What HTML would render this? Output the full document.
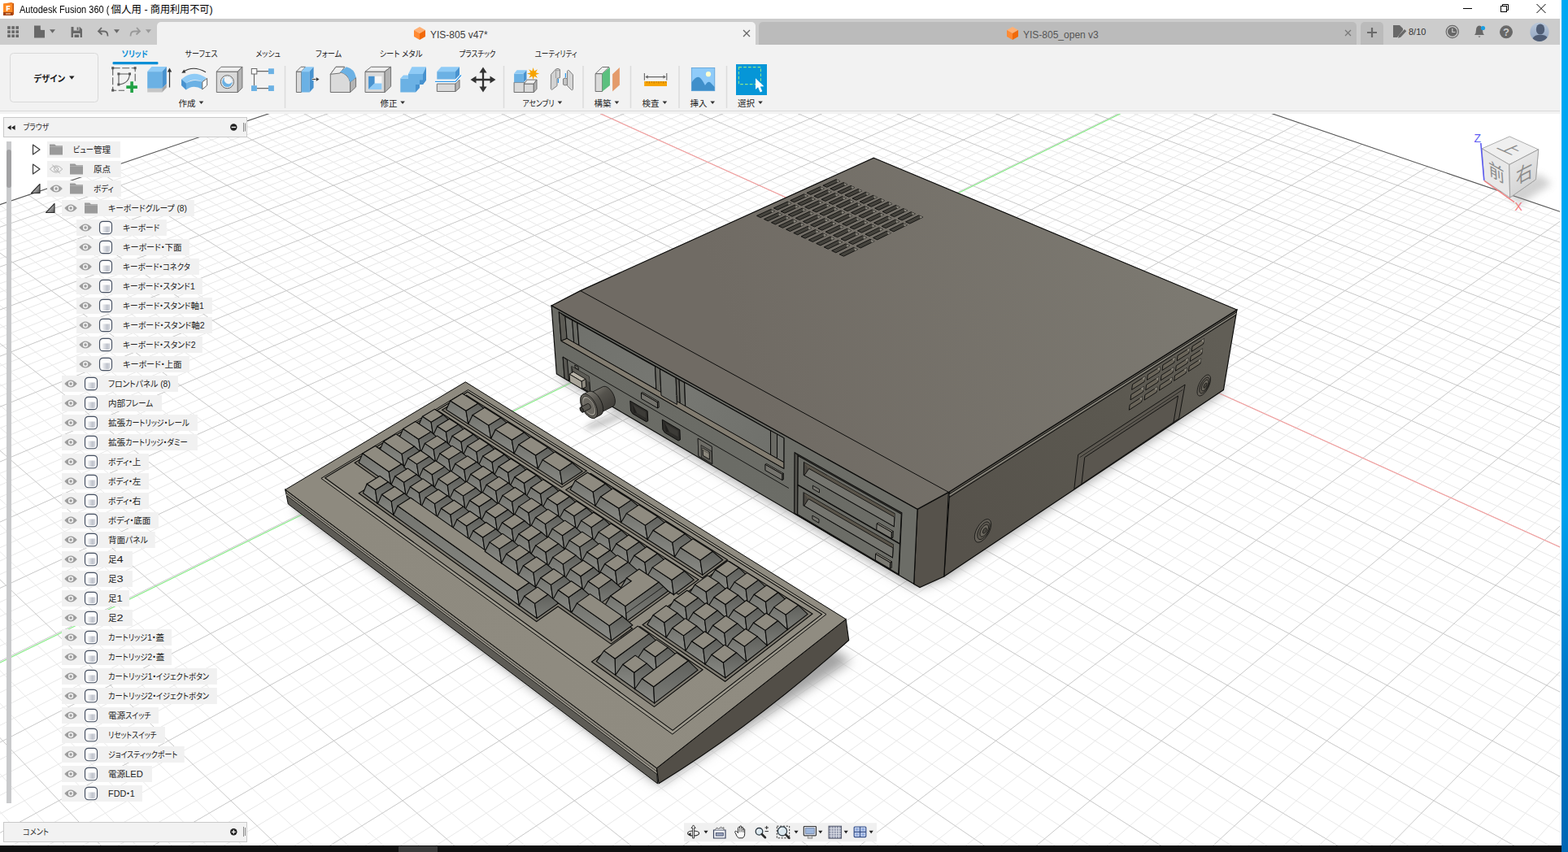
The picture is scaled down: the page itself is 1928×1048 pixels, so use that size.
<!DOCTYPE html>
<html><head><meta charset="utf-8"><title>Autodesk Fusion 360</title>
<style>html,body{margin:0;padding:0}body{width:1928px;height:1048px;overflow:hidden;position:relative;background:#fff;font-family:"Liberation Sans","Noto Sans CJK JP",sans-serif}.a{position:absolute}svg{position:absolute;left:0;top:0}svg text{font-feature-settings:"palt"}</style></head><body>
<div class="a" style="left:0px;top:0px;width:1920px;height:23px;background:#fff;"></div><div class="a" style="left:0px;top:23px;width:1918px;height:32px;background:#cccccc;"></div><div class="a" style="left:0px;top:55px;width:1918px;height:85px;background:#f2f2f2;"></div><div class="a" style="left:0px;top:136px;width:1918px;height:1.2px;background:#dadada;"></div><div class="a" style="left:193px;top:27px;width:736px;height:28px;background:#f2f2f2;border-radius:5px 5px 0 0"></div><div class="a" style="left:933px;top:27px;width:735px;height:28px;background:#bbbbbb;border-radius:5px 5px 0 0"></div><div class="a" style="left:1673px;top:27px;width:28px;height:28px;background:#bbbbbb;border-radius:5px 5px 0 0"></div>
<svg width="1928" height="1048" viewBox="0 0 1928 1048">
<defs><linearGradient id="av" x1="0" y1="0" x2="0" y2="1"><stop offset="0" stop-color="#b9c7d9"/><stop offset="1" stop-color="#8fa4c0"/></linearGradient><clipPath id="avc"><circle cx="1893" cy="39.3" r="11.6"/></clipPath><clipPath id="cv"><rect x="0" y="140" width="1918" height="900"/></clipPath><linearGradient id="gTop" gradientUnits="userSpaceOnUse" x1="930" y1="500" x2="1450" y2="325"><stop offset="0" stop-color="#706b64"/><stop offset="1" stop-color="#7c7971"/></linearGradient><linearGradient id="gFront" gradientUnits="userSpaceOnUse" x1="690" y1="420" x2="1120" y2="660"><stop offset="0" stop-color="#6a6b65"/><stop offset="1" stop-color="#6c6d67"/></linearGradient><linearGradient id="gCover" gradientUnits="userSpaceOnUse" x1="700" y1="400" x2="960" y2="560"><stop offset="0" stop-color="#70716c"/><stop offset="0.5" stop-color="#777873"/><stop offset="1" stop-color="#6f706b"/></linearGradient><linearGradient id="gSide" gradientUnits="userSpaceOnUse" x1="1170" y1="660" x2="1510" y2="430"><stop offset="0" stop-color="#56524b"/><stop offset="0.6" stop-color="#5b5850"/><stop offset="1" stop-color="#615e56"/></linearGradient><filter id="blur12" x="-20%" y="-20%" width="140%" height="140%"><feGaussianBlur stdDeviation="7"/></filter><filter id="blur4" x="-20%" y="-20%" width="140%" height="140%"><feGaussianBlur stdDeviation="3.5"/></filter><linearGradient id="gKnob" gradientUnits="userSpaceOnUse" x1="722" y1="478" x2="748" y2="508"><stop offset="0" stop-color="#8a877f"/><stop offset="0.45" stop-color="#55534d"/><stop offset="1" stop-color="#3d3b37"/></linearGradient><linearGradient id="gFdd" gradientUnits="userSpaceOnUse" x1="985" y1="570" x2="1100" y2="690"><stop offset="0" stop-color="#696a64"/><stop offset="1" stop-color="#6d6e68"/></linearGradient><linearGradient id="gPlate" gradientUnits="userSpaceOnUse" x1="420" y1="640" x2="1000" y2="760"><stop offset="0" stop-color="#8e8a7f"/><stop offset="1" stop-color="#908c81"/></linearGradient><linearGradient id="gKF" x1="0" y1="0" x2="0" y2="1"><stop offset="0" stop-color="#73746f"/><stop offset="1" stop-color="#8a8b86"/></linearGradient><linearGradient id="gKR" x1="0" y1="0" x2="0" y2="1"><stop offset="0" stop-color="#5f605c"/><stop offset="1" stop-color="#7b7c77"/></linearGradient><filter id="blur5" x="-50%" y="-50%" width="200%" height="200%"><feGaussianBlur stdDeviation="5"/></filter><linearGradient id="gVc" gradientUnits="userSpaceOnUse" x1="1860" y1="200" x2="1885" y2="240"><stop offset="0" stop-color="#e6e6e6"/><stop offset="1" stop-color="#cfcfcf"/></linearGradient></defs>
<g clip-path="url(#cv)"><rect x="0" y="140" width="1918" height="900" fill="#fff"/><path d="M949.5 -69.6 L-621.0 461.7M959.4 -66.2 L-614.3 470.0M969.4 -62.8 L-607.6 478.5M989.7 -55.9 L-593.9 495.6M999.9 -52.5 L-586.9 504.4M1010.2 -49.0 L-579.8 513.2M1020.5 -45.4 L-572.7 522.1M1041.5 -38.3 L-558.2 540.3M1052.1 -34.7 L-550.8 549.6M1062.8 -31.0 L-543.3 559.0M1073.5 -27.4 L-535.7 568.5M1095.3 -19.9 L-520.3 587.8M1106.3 -16.2 L-512.4 597.6M1117.4 -12.4 L-504.4 607.6M1128.6 -8.6 L-496.4 617.7M1151.2 -0.9 L-480.0 638.3M1162.7 3.0 L-471.6 648.7M1174.2 6.9 L-463.1 659.4M1185.8 10.9 L-454.5 670.1M1209.3 18.9 L-437.0 692.0M1221.2 22.9 L-428.1 703.2M1233.2 27.0 L-419.0 714.5M1245.3 31.1 L-409.9 726.0M1269.8 39.5 L-391.2 749.5M1282.2 43.7 L-381.6 761.4M1294.7 48.0 L-371.9 773.5M1307.2 52.2 L-362.1 785.8M1332.7 60.9 L-342.1 810.9M1345.6 65.3 L-331.9 823.7M1358.6 69.7 L-321.5 836.7M1371.7 74.2 L-311.0 849.9M1398.3 83.3 L-289.5 876.8M1411.8 87.8 L-278.5 890.6M1425.3 92.5 L-267.3 904.5M1439.0 97.1 L-256.0 918.7M1466.7 106.6 L-232.8 947.7M1480.7 111.3 L-221.0 962.5M1494.9 116.2 L-209.0 977.6M1509.2 121.0 L-196.8 992.8M1538.1 130.9 L-171.8 1024.1M1552.7 135.9 L-159.0 1040.1M1567.5 140.9 L-146.0 1056.4M1582.5 146.0 L-132.8 1072.9M1612.7 156.3 L-105.8 1106.8M1628.0 161.5 L-91.9 1124.2M1643.5 166.8 L-77.8 1141.8M1659.1 172.1 L-63.5 1159.7M1690.7 182.9 L-34.2 1196.5M1706.7 188.3 L-19.1 1215.4M1722.9 193.8 L-3.8 1234.6M1739.2 199.4 L11.8 1254.1M1772.4 210.7 L43.8 1294.2M1789.2 216.4 L60.3 1314.8M1806.1 222.2 L77.0 1335.7M1823.2 228.0 L94.1 1357.0M1858.0 239.8 L129.1 1400.9M1875.6 245.8 L147.1 1423.5M1893.4 251.9 L165.4 1446.4M1911.3 258.0 L184.1 1469.9M1947.8 270.4 L222.6 1518.1M1966.3 276.7 L242.4 1542.9M1985.0 283.1 L262.7 1568.2M2003.8 289.5 L283.3 1594.0M2042.1 302.6 L325.8 1647.2M2061.6 309.2 L347.7 1674.6M2081.2 315.9 L370.0 1702.7M2101.1 322.6 L392.9 1731.3M2141.4 336.4 L440.0 1790.3M2161.8 343.3 L464.4 1820.8M2182.5 350.4 L489.3 1852.0M2203.4 357.5 L514.7 1883.8M2245.9 372.0 L567.4 1949.7M2267.4 379.3 L594.6 1983.8M2289.2 386.7 L622.5 2018.7M2311.3 394.3 L651.0 2054.4M2356.1 409.5 L710.1 2128.5M2378.8 417.3 L740.7 2166.9M2401.9 425.1 L772.1 2206.2M2425.1 433.0 L804.3 2246.5M2472.5 449.2 L871.2 2330.2M2496.5 457.4 L906.0 2373.8M2520.9 465.7 L941.6 2418.4M949.5 -69.6 L2532.6 469.6M939.5 -66.2 L2525.9 478.1M929.5 -62.8 L2519.1 486.6M919.3 -59.4 L2512.2 495.2M898.8 -52.5 L2498.1 512.8M888.5 -49.0 L2491.0 521.7M878.0 -45.4 L2483.8 530.8M867.5 -41.9 L2476.5 539.9M846.2 -34.7 L2461.6 558.5M835.5 -31.0 L2454.0 568.0M824.6 -27.4 L2446.4 577.6M813.7 -23.7 L2438.6 587.4M791.6 -16.2 L2422.8 607.2M780.5 -12.4 L2414.7 617.2M769.2 -8.6 L2406.6 627.4M757.9 -4.8 L2398.3 637.8M734.9 3.0 L2381.5 658.9M723.3 6.9 L2372.9 669.6M711.6 10.9 L2364.2 680.5M699.8 14.9 L2355.4 691.5M675.9 22.9 L2337.4 714.0M663.9 27.0 L2328.3 725.5M651.7 31.1 L2319.0 737.1M639.4 35.3 L2309.6 748.9M614.6 43.7 L2290.4 773.0M602.0 48.0 L2280.6 785.3M589.3 52.2 L2270.6 797.7M576.6 56.6 L2260.5 810.3M550.7 65.3 L2240.0 836.1M537.6 69.7 L2229.4 849.3M524.4 74.2 L2218.8 862.6M511.1 78.7 L2207.9 876.2M484.1 87.8 L2185.8 903.9M470.4 92.5 L2174.5 918.1M456.7 97.1 L2163.0 932.4M442.8 101.8 L2151.4 947.0M414.6 111.3 L2127.5 976.9M400.4 116.2 L2115.3 992.2M386.0 121.0 L2103.0 1007.7M371.5 125.9 L2090.4 1023.4M342.1 135.9 L2064.6 1055.7M327.2 140.9 L2051.4 1072.2M312.2 146.0 L2038.0 1089.0M297.1 151.1 L2024.4 1106.0M266.3 161.5 L1996.5 1141.0M250.8 166.8 L1982.2 1158.9M235.1 172.1 L1967.6 1177.1M219.2 177.5 L1952.8 1195.7M187.1 188.3 L1922.5 1233.7M170.8 193.8 L1906.9 1253.2M154.3 199.4 L1891.0 1273.0M137.7 205.0 L1874.9 1293.3M104.1 216.4 L1841.7 1334.8M87.0 222.2 L1824.7 1356.1M69.8 228.0 L1807.4 1377.8M52.4 233.9 L1789.7 1399.9M17.1 245.8 L1753.4 1445.4M-0.9 251.9 L1734.7 1468.8M-18.9 258.0 L1715.7 1492.6M-37.2 264.2 L1696.2 1517.0M-74.3 276.7 L1656.3 1567.0M-93.1 283.1 L1635.7 1592.8M-112.1 289.5 L1614.7 1619.1M-131.3 296.0 L1593.2 1646.0M-170.2 309.2 L1549.0 1701.4M-190.0 315.9 L1526.2 1730.0M-210.0 322.6 L1502.8 1759.1M-230.2 329.5 L1479.0 1789.0M-271.2 343.3 L1429.8 1850.6M-292.0 350.4 L1404.4 1882.4M-313.0 357.5 L1378.4 1914.9M-334.3 364.7 L1351.9 1948.2M-377.5 379.3 L1296.8 2017.1M-399.5 386.7 L1268.3 2052.8M-421.6 394.3 L1239.1 2089.4M-444.1 401.8 L1209.3 2126.8M-489.7 417.3 L1147.3 2204.4M-512.9 425.1 L1115.1 2244.7M-536.3 433.0 L1082.2 2286.0M-560.0 441.1 L1048.3 2328.3M-608.2 457.4 L978.0 2416.4" stroke="#e8e8e8" stroke-width="1" fill="none"/><path d="M979.5 -59.4 L-600.7 487.0M1031.0 -41.9 L-565.5 531.2M1084.4 -23.7 L-528.0 578.1M1139.9 -4.8 L-488.2 627.9M1197.5 14.9 L-445.8 681.0M1257.5 35.3 L-400.6 737.7M1319.9 56.6 L-352.2 798.3M1385.0 78.7 L-300.3 863.2M1452.8 101.8 L-244.5 933.1M1523.6 125.9 L-184.4 1008.4M1597.5 151.1 L-119.4 1089.7M1674.8 177.5 L-49.0 1178.0M1755.7 205.0 L27.7 1273.9M1840.5 233.9 L111.4 1378.8M1929.5 264.2 L203.2 1493.7M2022.9 296.0 L304.3 1620.3M2121.1 329.5 L416.2 1760.5M2224.5 364.7 L540.7 1916.4M2333.6 401.8 L680.2 2091.0M2448.7 441.1 L837.4 2287.8M909.1 -55.9 L2505.2 504.0M856.9 -38.3 L2469.1 549.2M802.7 -19.9 L2430.7 597.2M746.4 -0.9 L2390.0 648.3M687.9 18.9 L2346.5 702.7M627.1 39.5 L2300.0 760.9M563.7 60.9 L2250.3 823.1M497.6 83.3 L2197.0 889.9M428.8 106.6 L2139.5 961.8M356.9 130.9 L2077.6 1039.4M281.8 156.3 L2010.6 1123.4M203.2 182.9 L1937.8 1214.5M121.0 210.7 L1858.5 1313.8M34.8 239.8 L1771.7 1422.4M-55.6 270.4 L1676.5 1541.7M-150.6 302.6 L1571.3 1673.4M-250.5 336.4 L1454.7 1819.4M-355.8 372.0 L1324.7 1982.3M-466.8 409.5 L1178.7 2165.1M-584.0 449.2 L1013.6 2371.8" stroke="#c8c8c8" stroke-width="1" fill="none"/><path d="M-621.0 461.7 L949.5 -69.6 L2532.6 469.6" stroke="#555" stroke-width="1.1" fill="none"/><path d="M563.7 60.9 L2250.3 823.1" stroke="#f6a0a0" stroke-width="1.15" fill="none"/><path d="M1454.2 102.3 L-243.3 934.5" stroke="#86ec86" stroke-width="1.15" fill="none"/><g filter="url(#blur12)"><path d="M685.5 462.1L1126.2 723.0L1163.7 710.6L1507.5 479.0L1071.5 282.9Z" fill="#9c9c9c" /></g><path d="M1167.7 604.5L1520.9 381.0L1504.4 479.6L1160.8 709.0Z" fill="url(#gSide)" stroke="#0c0c0b" stroke-width="1.2" /><path d="M1167.5 607.7L1520.4 383.9L1520.0 386.1L1167.4 610.1Z" fill="#8d8a80" /><path d="M1167.5 607.7 L1520.4 383.9" stroke="#0c0c0b" stroke-width="1.0" fill="none"/><path d="M1167.2 611.8 L1519.8 387.6" stroke="#0c0c0b" stroke-width="1.0" fill="none"/><path d="M1466.1 426.0L1480.6 416.7L1479.6 423.1L1465.1 432.4Z" fill="#696459" stroke="#0c0c0b" stroke-width="0.9" /><path d="M1480.6 416.7L1477.3 418.8L1479.9 421.6Z" fill="#8a867b" /><path d="M1464.2 438.3L1478.7 428.9L1477.7 435.3L1463.2 444.6Z" fill="#696459" stroke="#0c0c0b" stroke-width="0.9" /><path d="M1478.7 428.9L1475.4 431.1L1477.9 433.8Z" fill="#8a867b" /><path d="M1462.3 450.5L1476.8 441.1L1475.8 447.4L1461.4 456.8Z" fill="#696459" stroke="#0c0c0b" stroke-width="0.9" /><path d="M1476.8 441.1L1473.5 443.2L1476.0 446.0Z" fill="#8a867b" /><path d="M1448.1 437.4L1462.9 428.0L1461.9 434.4L1447.2 443.8Z" fill="#696459" stroke="#0c0c0b" stroke-width="0.9" /><path d="M1462.9 428.0L1459.6 430.1L1462.2 432.9Z" fill="#8a867b" /><path d="M1446.3 449.8L1461.0 440.3L1460.1 446.7L1445.4 456.2Z" fill="#696459" stroke="#0c0c0b" stroke-width="0.9" /><path d="M1461.0 440.3L1457.7 442.4L1460.3 445.2Z" fill="#8a867b" /><path d="M1444.5 462.0L1459.2 452.5L1458.2 458.9L1443.6 468.4Z" fill="#696459" stroke="#0c0c0b" stroke-width="0.9" /><path d="M1459.2 452.5L1455.9 454.7L1458.4 457.4Z" fill="#8a867b" /><path d="M1429.9 449.0L1444.9 439.5L1443.9 445.9L1429.0 455.5Z" fill="#696459" stroke="#0c0c0b" stroke-width="0.9" /><path d="M1444.9 439.5L1441.5 441.6L1444.2 444.4Z" fill="#8a867b" /><path d="M1428.1 461.5L1443.1 451.9L1442.1 458.2L1427.2 467.9Z" fill="#696459" stroke="#0c0c0b" stroke-width="0.9" /><path d="M1443.1 451.9L1439.7 454.0L1442.3 456.8Z" fill="#8a867b" /><path d="M1426.3 473.8L1441.3 464.1L1440.3 470.5L1425.4 480.2Z" fill="#696459" stroke="#0c0c0b" stroke-width="0.9" /><path d="M1441.3 464.1L1437.9 466.3L1440.5 469.0Z" fill="#8a867b" /><path d="M1411.3 460.9L1426.6 451.2L1425.7 457.6L1410.4 467.4Z" fill="#696459" stroke="#0c0c0b" stroke-width="0.9" /><path d="M1426.6 451.2L1423.1 453.3L1425.9 456.1Z" fill="#8a867b" /><path d="M1409.6 473.3L1424.8 463.6L1423.9 470.0L1408.7 479.8Z" fill="#696459" stroke="#0c0c0b" stroke-width="0.9" /><path d="M1424.8 463.6L1421.4 465.8L1424.1 468.5Z" fill="#8a867b" /><path d="M1407.9 485.7L1423.1 475.9L1422.2 482.3L1407.0 492.1Z" fill="#696459" stroke="#0c0c0b" stroke-width="0.9" /><path d="M1423.1 475.9L1419.6 478.1L1422.4 480.8Z" fill="#8a867b" /><path d="M1392.5 472.9L1408.0 463.0L1407.1 469.5L1391.6 479.4Z" fill="#696459" stroke="#0c0c0b" stroke-width="0.9" /><path d="M1408.0 463.0L1404.5 465.2L1407.3 468.0Z" fill="#8a867b" /><path d="M1390.8 485.4L1406.3 475.5L1405.4 482.0L1390.0 491.9Z" fill="#696459" stroke="#0c0c0b" stroke-width="0.9" /><path d="M1406.3 475.5L1402.8 477.7L1405.6 480.5Z" fill="#8a867b" /><path d="M1389.2 497.9L1404.6 487.9L1403.7 494.3L1388.3 504.3Z" fill="#696459" stroke="#0c0c0b" stroke-width="0.9" /><path d="M1404.6 487.9L1401.1 490.1L1403.9 492.8Z" fill="#8a867b" /><path d="M1320.8 601.4L1325.7 559.3L1457.1 473.1L1449.6 514.8Z" fill="#5a564f" stroke="#0c0c0b" stroke-width="0.9" /><path d="M1327.8 561.1L1454.6 477.7L1454.3 480.1L1327.6 563.5Z" fill="#6a665d" /><path d="M1329.9 595.2 L1333.7 562.6 L1448.5 487.0 L1443.0 519.2" stroke="#0c0c0b" stroke-width="0.9" fill="none"/><path d="M1327.7 562.6 L1454.4 479.2" stroke="#0c0c0b" stroke-width="0.8" fill="none"/><path d="M1472.3 479.4L1472.7 477.2L1473.4 475.0L1474.3 472.7L1475.3 470.5L1476.6 468.4L1477.9 466.4L1479.3 464.7L1480.8 463.3L1482.2 462.2L1483.6 461.4L1484.8 461.1L1485.9 461.1L1486.9 461.6L1487.6 462.4L1488.2 463.5L1488.5 465.0L1488.5 466.8L1488.3 468.7L1487.8 470.9L1487.1 473.1L1486.3 475.3L1485.2 477.5L1484.0 479.6L1482.7 481.6L1481.3 483.3L1479.8 484.7L1478.4 485.8L1477.1 486.5L1475.8 486.9L1474.7 486.9L1473.7 486.5L1472.9 485.7L1472.4 484.5L1472.1 483.1L1472.1 481.3Z" fill="#66625a" stroke="#0c0c0b" stroke-width="0.8" /><path d="M1474.9 478.0L1475.2 476.4L1475.7 474.7L1476.4 473.0L1477.2 471.3L1478.2 469.7L1479.2 468.2L1480.3 466.9L1481.3 465.8L1482.4 465.0L1483.5 464.4L1484.4 464.2L1485.3 464.2L1486.0 464.5L1486.6 465.1L1487.0 466.0L1487.2 467.1L1487.2 468.5L1487.1 470.0L1486.7 471.6L1486.2 473.3L1485.5 475.0L1484.7 476.7L1483.8 478.2L1482.8 479.7L1481.7 481.0L1480.6 482.1L1479.6 482.9L1478.5 483.5L1477.6 483.8L1476.7 483.8L1476.0 483.5L1475.4 482.8L1475.0 482.0L1474.8 480.9L1474.7 479.5Z" fill="#5c5850" stroke="#0c0c0b" stroke-width="0.8" /><path d="M1477.4 476.8L1477.6 475.7L1478.0 474.5L1478.4 473.4L1479.0 472.2L1479.6 471.1L1480.3 470.1L1481.1 469.2L1481.8 468.5L1482.5 467.9L1483.2 467.5L1483.9 467.3L1484.5 467.3L1485.0 467.6L1485.4 468.0L1485.6 468.6L1485.8 469.3L1485.8 470.3L1485.7 471.3L1485.5 472.4L1485.1 473.5L1484.7 474.7L1484.1 475.9L1483.5 477.0L1482.8 478.0L1482.1 478.8L1481.3 479.6L1480.6 480.2L1479.9 480.5L1479.2 480.7L1478.6 480.7L1478.1 480.5L1477.7 480.1L1477.5 479.5L1477.3 478.7L1477.3 477.8Z" fill="#6b675e" stroke="#0c0c0b" stroke-width="0.8" /><path d="M1480.1 475.4L1480.2 474.9L1480.3 474.4L1480.6 473.9L1480.8 473.3L1481.1 472.8L1481.4 472.3L1481.8 471.9L1482.1 471.6L1482.4 471.3L1482.8 471.2L1483.1 471.1L1483.3 471.1L1483.6 471.2L1483.8 471.4L1483.9 471.6L1483.9 472.0L1484.0 472.4L1483.9 472.9L1483.8 473.4L1483.6 473.9L1483.4 474.5L1483.2 475.0L1482.9 475.5L1482.6 476.0L1482.2 476.4L1481.9 476.7L1481.5 477.0L1481.2 477.2L1480.9 477.3L1480.6 477.3L1480.4 477.2L1480.2 477.0L1480.1 476.7L1480.0 476.3L1480.0 475.9Z" fill="#4c4942" stroke="#0c0c0b" stroke-width="0.8" /><path d="M1198.4 659.6L1198.7 657.3L1199.3 654.9L1200.2 652.4L1201.4 649.9L1202.8 647.5L1204.3 645.3L1206.0 643.3L1207.8 641.6L1209.5 640.3L1211.3 639.3L1212.9 638.8L1214.5 638.6L1215.8 639.0L1216.9 639.7L1217.8 640.8L1218.3 642.3L1218.6 644.1L1218.6 646.2L1218.2 648.5L1217.6 650.9L1216.7 653.3L1215.6 655.8L1214.2 658.1L1212.7 660.3L1211.0 662.3L1209.3 664.0L1207.5 665.3L1205.8 666.3L1204.1 666.9L1202.6 667.0L1201.3 666.8L1200.1 666.1L1199.3 664.9L1198.7 663.5L1198.4 661.7Z" fill="#66625a" stroke="#0c0c0b" stroke-width="0.8" /><path d="M1201.8 657.8L1202.0 656.1L1202.5 654.2L1203.2 652.4L1204.1 650.5L1205.1 648.7L1206.3 647.0L1207.6 645.5L1208.9 644.2L1210.2 643.2L1211.5 642.4L1212.8 642.0L1214.0 641.9L1215.0 642.2L1215.8 642.7L1216.5 643.6L1216.9 644.7L1217.1 646.1L1217.1 647.7L1216.8 649.4L1216.4 651.2L1215.7 653.1L1214.8 654.9L1213.8 656.7L1212.6 658.4L1211.3 659.9L1210.0 661.2L1208.7 662.2L1207.4 663.0L1206.1 663.4L1205.0 663.5L1203.9 663.3L1203.1 662.7L1202.4 661.9L1202.0 660.8L1201.8 659.4Z" fill="#5c5850" stroke="#0c0c0b" stroke-width="0.8" /><path d="M1205.0 656.2L1205.1 655.0L1205.5 653.7L1205.9 652.4L1206.5 651.2L1207.2 649.9L1208.1 648.8L1208.9 647.7L1209.8 646.9L1210.7 646.2L1211.7 645.7L1212.5 645.4L1213.3 645.3L1214.0 645.5L1214.6 645.8L1215.0 646.4L1215.3 647.2L1215.5 648.1L1215.4 649.2L1215.3 650.4L1214.9 651.7L1214.5 652.9L1213.9 654.2L1213.2 655.4L1212.4 656.6L1211.5 657.6L1210.6 658.5L1209.7 659.2L1208.8 659.7L1207.9 660.0L1207.1 660.1L1206.4 659.9L1205.9 659.5L1205.4 659.0L1205.1 658.2L1205.0 657.2Z" fill="#6b675e" stroke="#0c0c0b" stroke-width="0.8" /><path d="M1208.4 654.4L1208.5 653.8L1208.6 653.2L1208.9 652.6L1209.1 652.1L1209.5 651.5L1209.8 651.0L1210.2 650.5L1210.6 650.1L1211.1 649.8L1211.5 649.5L1211.9 649.4L1212.2 649.4L1212.6 649.4L1212.8 649.6L1213.0 649.9L1213.2 650.2L1213.2 650.7L1213.2 651.2L1213.2 651.7L1213.0 652.3L1212.8 652.9L1212.5 653.5L1212.2 654.0L1211.8 654.6L1211.4 655.0L1211.0 655.4L1210.6 655.8L1210.2 656.0L1209.8 656.1L1209.4 656.2L1209.1 656.1L1208.8 655.9L1208.6 655.7L1208.5 655.3L1208.4 654.9Z" fill="#4c4942" stroke="#0c0c0b" stroke-width="0.8" /><path d="M1128.1 626.4L1166.4 605.4L1160.8 709.0L1131.0 722.5L1123.7 718.3Z" fill="#56524b" stroke="#0c0c0b" stroke-width="1.2" /><path d="M1074.4 194.2L1520.9 381.0L1166.4 605.4L1128.1 626.4L678.1 376.0L713.6 357.6Z" fill="url(#gTop)" stroke="#0c0c0b" stroke-width="1.2" /><path d="M713.6 357.6 L1166.4 605.4" stroke="#0c0c0b" stroke-width="1" fill="none"/><path d="M930.5 265.4L935.2 267.6L952.5 259.7L947.7 257.5Z" fill="#45433d" stroke="#0c0c0b" stroke-width="0.9" /><path d="M952.5 259.7L948.9 261.4L948.6 257.9Z" fill="#8a877e" /><path d="M939.4 269.5L944.2 271.8L961.5 263.8L956.7 261.6Z" fill="#45433d" stroke="#0c0c0b" stroke-width="0.9" /><path d="M961.5 263.8L957.8 265.5L957.5 262.0Z" fill="#8a877e" /><path d="M948.4 273.7L953.3 276.0L970.5 268.0L965.7 265.7Z" fill="#45433d" stroke="#0c0c0b" stroke-width="0.9" /><path d="M970.5 268.0L966.9 269.7L966.6 266.2Z" fill="#8a877e" /><path d="M957.5 278.0L962.4 280.3L979.6 272.2L974.7 269.9Z" fill="#45433d" stroke="#0c0c0b" stroke-width="0.9" /><path d="M979.6 272.2L976.0 273.9L975.6 270.3Z" fill="#8a877e" /><path d="M966.6 282.2L971.5 284.5L988.8 276.4L983.9 274.1Z" fill="#45433d" stroke="#0c0c0b" stroke-width="0.9" /><path d="M988.8 276.4L985.1 278.1L984.8 274.5Z" fill="#8a877e" /><path d="M975.8 286.5L980.7 288.8L998.0 280.6L993.1 278.4Z" fill="#45433d" stroke="#0c0c0b" stroke-width="0.9" /><path d="M998.0 280.6L994.3 282.4L994.0 278.8Z" fill="#8a877e" /><path d="M985.0 290.8L990.0 293.2L1007.3 284.9L1002.3 282.6Z" fill="#45433d" stroke="#0c0c0b" stroke-width="0.9" /><path d="M1007.3 284.9L1003.6 286.7L1003.2 283.0Z" fill="#8a877e" /><path d="M994.3 295.2L999.4 297.5L1016.6 289.2L1011.6 286.9Z" fill="#45433d" stroke="#0c0c0b" stroke-width="0.9" /><path d="M1016.6 289.2L1013.0 291.0L1012.5 287.3Z" fill="#8a877e" /><path d="M1003.7 299.5L1008.8 301.9L1026.0 293.6L1021.0 291.2Z" fill="#45433d" stroke="#0c0c0b" stroke-width="0.9" /><path d="M1026.0 293.6L1022.4 295.3L1021.9 291.6Z" fill="#8a877e" /><path d="M1013.2 303.9L1018.2 306.3L1035.5 297.9L1030.4 295.6Z" fill="#45433d" stroke="#0c0c0b" stroke-width="0.9" /><path d="M1035.5 297.9L1031.8 299.7L1031.3 296.0Z" fill="#8a877e" /><path d="M1022.7 308.4L1027.8 310.8L1045.0 302.3L1039.9 299.9Z" fill="#45433d" stroke="#0c0c0b" stroke-width="0.9" /><path d="M1045.0 302.3L1041.4 304.1L1040.8 300.4Z" fill="#8a877e" /><path d="M1032.2 312.8L1037.4 315.2L1054.6 306.7L1049.5 304.4Z" fill="#45433d" stroke="#0c0c0b" stroke-width="0.9" /><path d="M1054.6 306.7L1051.0 308.5L1050.4 304.8Z" fill="#8a877e" /><path d="M951.3 255.9L956.1 258.1L973.1 250.3L968.3 248.1Z" fill="#45433d" stroke="#0c0c0b" stroke-width="0.9" /><path d="M973.1 250.3L969.5 251.9L969.1 248.5Z" fill="#8a877e" /><path d="M960.2 260.0L965.0 262.2L982.0 254.3L977.2 252.1Z" fill="#45433d" stroke="#0c0c0b" stroke-width="0.9" /><path d="M982.0 254.3L978.4 256.0L978.1 252.5Z" fill="#8a877e" /><path d="M969.2 264.1L974.1 266.3L991.1 258.4L986.2 256.2Z" fill="#45433d" stroke="#0c0c0b" stroke-width="0.9" /><path d="M991.1 258.4L987.5 260.1L987.1 256.6Z" fill="#8a877e" /><path d="M978.3 268.3L983.2 270.5L1000.2 262.6L995.3 260.3Z" fill="#45433d" stroke="#0c0c0b" stroke-width="0.9" /><path d="M1000.2 262.6L996.6 264.2L996.2 260.8Z" fill="#8a877e" /><path d="M987.4 272.5L992.3 274.7L1009.3 266.7L1004.4 264.5Z" fill="#45433d" stroke="#0c0c0b" stroke-width="0.9" /><path d="M1009.3 266.7L1005.7 268.4L1005.3 264.9Z" fill="#8a877e" /><path d="M996.6 276.7L1001.5 279.0L1018.6 270.9L1013.6 268.7Z" fill="#45433d" stroke="#0c0c0b" stroke-width="0.9" /><path d="M1018.6 270.9L1015.0 272.6L1014.5 269.1Z" fill="#8a877e" /><path d="M1005.8 280.9L1010.8 283.2L1027.8 275.1L1022.8 272.9Z" fill="#45433d" stroke="#0c0c0b" stroke-width="0.9" /><path d="M1027.8 275.1L1024.2 276.8L1023.8 273.3Z" fill="#8a877e" /><path d="M1015.1 285.2L1020.2 287.5L1037.2 279.4L1032.2 277.1Z" fill="#45433d" stroke="#0c0c0b" stroke-width="0.9" /><path d="M1037.2 279.4L1033.6 281.1L1033.1 277.5Z" fill="#8a877e" /><path d="M1024.5 289.5L1029.6 291.8L1046.6 283.6L1041.5 281.3Z" fill="#45433d" stroke="#0c0c0b" stroke-width="0.9" /><path d="M1046.6 283.6L1043.0 285.4L1042.4 281.7Z" fill="#8a877e" /><path d="M1034.0 293.9L1039.0 296.2L1056.0 287.9L1051.0 285.6Z" fill="#45433d" stroke="#0c0c0b" stroke-width="0.9" /><path d="M1056.0 287.9L1052.4 289.7L1051.9 286.0Z" fill="#8a877e" /><path d="M1043.4 298.2L1048.6 300.6L1065.6 292.2L1060.4 289.9Z" fill="#45433d" stroke="#0c0c0b" stroke-width="0.9" /><path d="M1065.6 292.2L1062.0 294.0L1061.4 290.3Z" fill="#8a877e" /><path d="M1053.0 302.6L1058.2 305.0L1075.2 296.6L1070.0 294.3Z" fill="#45433d" stroke="#0c0c0b" stroke-width="0.9" /><path d="M1075.2 296.6L1071.6 298.4L1070.9 294.7Z" fill="#8a877e" /><path d="M971.8 246.5L976.6 248.7L993.3 241.0L988.5 238.8Z" fill="#45433d" stroke="#0c0c0b" stroke-width="0.9" /><path d="M993.3 241.0L989.8 242.6L989.4 239.2Z" fill="#8a877e" /><path d="M980.7 250.5L985.5 252.7L1002.3 245.0L997.5 242.8Z" fill="#45433d" stroke="#0c0c0b" stroke-width="0.9" /><path d="M1002.3 245.0L998.7 246.6L998.4 243.2Z" fill="#8a877e" /><path d="M989.7 254.6L994.6 256.8L1011.3 249.0L1006.5 246.9Z" fill="#45433d" stroke="#0c0c0b" stroke-width="0.9" /><path d="M1011.3 249.0L1007.8 250.7L1007.4 247.3Z" fill="#8a877e" /><path d="M998.8 258.7L1003.7 260.9L1020.4 253.1L1015.5 250.9Z" fill="#45433d" stroke="#0c0c0b" stroke-width="0.9" /><path d="M1020.4 253.1L1016.9 254.8L1016.4 251.3Z" fill="#8a877e" /><path d="M1007.9 262.9L1012.8 265.1L1029.6 257.2L1024.7 255.0Z" fill="#45433d" stroke="#0c0c0b" stroke-width="0.9" /><path d="M1029.6 257.2L1026.0 258.9L1025.6 255.4Z" fill="#8a877e" /><path d="M1017.1 267.0L1022.0 269.3L1038.8 261.3L1033.8 259.1Z" fill="#45433d" stroke="#0c0c0b" stroke-width="0.9" /><path d="M1038.8 261.3L1035.2 263.0L1034.7 259.5Z" fill="#8a877e" /><path d="M1026.3 271.2L1031.3 273.5L1048.1 265.5L1043.1 263.2Z" fill="#45433d" stroke="#0c0c0b" stroke-width="0.9" /><path d="M1048.1 265.5L1044.5 267.2L1044.0 263.6Z" fill="#8a877e" /><path d="M1035.6 275.4L1040.7 277.7L1057.4 269.6L1052.4 267.4Z" fill="#45433d" stroke="#0c0c0b" stroke-width="0.9" /><path d="M1057.4 269.6L1053.9 271.3L1053.3 267.8Z" fill="#8a877e" /><path d="M1045.0 279.6L1050.1 281.9L1066.8 273.8L1061.8 271.6Z" fill="#45433d" stroke="#0c0c0b" stroke-width="0.9" /><path d="M1066.8 273.8L1063.3 275.5L1062.7 272.0Z" fill="#8a877e" /><path d="M1054.4 283.9L1059.5 286.2L1076.3 278.1L1071.2 275.8Z" fill="#45433d" stroke="#0c0c0b" stroke-width="0.9" /><path d="M1076.3 278.1L1072.7 279.8L1072.1 276.2Z" fill="#8a877e" /><path d="M1063.9 288.2L1069.0 290.5L1085.8 282.3L1080.7 280.0Z" fill="#45433d" stroke="#0c0c0b" stroke-width="0.9" /><path d="M1085.8 282.3L1082.2 284.1L1081.6 280.5Z" fill="#8a877e" /><path d="M1073.5 292.5L1078.6 294.9L1095.4 286.6L1090.2 284.3Z" fill="#45433d" stroke="#0c0c0b" stroke-width="0.9" /><path d="M1095.4 286.6L1091.8 288.4L1091.1 284.7Z" fill="#8a877e" /><path d="M992.0 237.3L996.8 239.4L1013.3 231.8L1008.5 229.7Z" fill="#45433d" stroke="#0c0c0b" stroke-width="0.9" /><path d="M1013.3 231.8L1009.8 233.4L1009.4 230.1Z" fill="#8a877e" /><path d="M1000.9 241.3L1005.7 243.4L1022.2 235.8L1017.4 233.7Z" fill="#45433d" stroke="#0c0c0b" stroke-width="0.9" /><path d="M1022.2 235.8L1018.7 237.4L1018.3 234.0Z" fill="#8a877e" /><path d="M1009.9 245.3L1014.8 247.4L1031.3 239.8L1026.4 237.6Z" fill="#45433d" stroke="#0c0c0b" stroke-width="0.9" /><path d="M1031.3 239.8L1027.8 241.4L1027.3 238.0Z" fill="#8a877e" /><path d="M1019.0 249.3L1023.9 251.5L1040.4 243.8L1035.5 241.6Z" fill="#45433d" stroke="#0c0c0b" stroke-width="0.9" /><path d="M1040.4 243.8L1036.9 245.4L1036.4 242.0Z" fill="#8a877e" /><path d="M1028.1 253.4L1033.0 255.6L1049.5 247.8L1044.6 245.6Z" fill="#45433d" stroke="#0c0c0b" stroke-width="0.9" /><path d="M1049.5 247.8L1046.0 249.4L1045.5 246.0Z" fill="#8a877e" /><path d="M1037.3 257.5L1042.2 259.7L1058.7 251.9L1053.8 249.7Z" fill="#45433d" stroke="#0c0c0b" stroke-width="0.9" /><path d="M1058.7 251.9L1055.2 253.5L1054.7 250.1Z" fill="#8a877e" /><path d="M1046.5 261.6L1051.5 263.8L1068.0 255.9L1063.0 253.8Z" fill="#45433d" stroke="#0c0c0b" stroke-width="0.9" /><path d="M1068.0 255.9L1064.5 257.6L1063.9 254.2Z" fill="#8a877e" /><path d="M1055.8 265.7L1060.8 268.0L1077.3 260.1L1072.3 257.9Z" fill="#45433d" stroke="#0c0c0b" stroke-width="0.9" /><path d="M1077.3 260.1L1073.8 261.7L1073.2 258.3Z" fill="#8a877e" /><path d="M1065.2 269.9L1070.2 272.2L1086.7 264.2L1081.7 262.0Z" fill="#45433d" stroke="#0c0c0b" stroke-width="0.9" /><path d="M1086.7 264.2L1083.2 265.9L1082.6 262.4Z" fill="#8a877e" /><path d="M1074.6 274.1L1079.7 276.4L1096.2 268.4L1091.1 266.1Z" fill="#45433d" stroke="#0c0c0b" stroke-width="0.9" /><path d="M1096.2 268.4L1092.7 270.1L1092.0 266.5Z" fill="#8a877e" /><path d="M1084.1 278.4L1089.2 280.6L1105.7 272.6L1100.6 270.3Z" fill="#45433d" stroke="#0c0c0b" stroke-width="0.9" /><path d="M1105.7 272.6L1102.2 274.3L1101.5 270.7Z" fill="#8a877e" /><path d="M1093.6 282.6L1098.8 284.9L1115.3 276.8L1110.1 274.5Z" fill="#45433d" stroke="#0c0c0b" stroke-width="0.9" /><path d="M1115.3 276.8L1111.8 278.5L1111.1 274.9Z" fill="#8a877e" /><path d="M1011.9 228.2L1016.7 230.3L1032.9 222.8L1028.1 220.7Z" fill="#45433d" stroke="#0c0c0b" stroke-width="0.9" /><path d="M1032.9 222.8L1029.5 224.4L1029.0 221.1Z" fill="#8a877e" /><path d="M1020.8 232.1L1025.6 234.2L1041.9 226.7L1037.1 224.6Z" fill="#45433d" stroke="#0c0c0b" stroke-width="0.9" /><path d="M1041.9 226.7L1038.5 228.3L1038.0 225.0Z" fill="#8a877e" /><path d="M1029.8 236.1L1034.7 238.2L1050.9 230.6L1046.1 228.5Z" fill="#45433d" stroke="#0c0c0b" stroke-width="0.9" /><path d="M1050.9 230.6L1047.5 232.2L1047.0 228.9Z" fill="#8a877e" /><path d="M1038.9 240.0L1043.8 242.2L1060.0 234.6L1055.1 232.5Z" fill="#45433d" stroke="#0c0c0b" stroke-width="0.9" /><path d="M1060.0 234.6L1056.6 236.2L1056.0 232.8Z" fill="#8a877e" /><path d="M1048.0 244.1L1052.9 246.2L1069.2 238.6L1064.3 236.4Z" fill="#45433d" stroke="#0c0c0b" stroke-width="0.9" /><path d="M1069.2 238.6L1065.7 240.2L1065.1 236.8Z" fill="#8a877e" /><path d="M1057.2 248.1L1062.1 250.3L1078.4 242.6L1073.4 240.4Z" fill="#45433d" stroke="#0c0c0b" stroke-width="0.9" /><path d="M1078.4 242.6L1074.9 244.2L1074.3 240.8Z" fill="#8a877e" /><path d="M1066.4 252.1L1071.4 254.3L1087.6 246.6L1082.7 244.4Z" fill="#45433d" stroke="#0c0c0b" stroke-width="0.9" /><path d="M1087.6 246.6L1084.2 248.2L1083.6 244.8Z" fill="#8a877e" /><path d="M1075.7 256.2L1080.7 258.4L1097.0 250.6L1092.0 248.5Z" fill="#45433d" stroke="#0c0c0b" stroke-width="0.9" /><path d="M1097.0 250.6L1093.5 252.3L1092.9 248.8Z" fill="#8a877e" /><path d="M1085.1 260.3L1090.1 262.6L1106.3 254.7L1101.3 252.5Z" fill="#45433d" stroke="#0c0c0b" stroke-width="0.9" /><path d="M1106.3 254.7L1102.9 256.4L1102.2 252.9Z" fill="#8a877e" /><path d="M1094.5 264.5L1099.5 266.7L1115.8 258.8L1110.7 256.6Z" fill="#45433d" stroke="#0c0c0b" stroke-width="0.9" /><path d="M1115.8 258.8L1112.3 260.5L1111.6 257.0Z" fill="#8a877e" /><path d="M1104.0 268.7L1109.1 270.9L1125.3 262.9L1120.2 260.7Z" fill="#45433d" stroke="#0c0c0b" stroke-width="0.9" /><path d="M1125.3 262.9L1121.9 264.6L1121.1 261.1Z" fill="#8a877e" /><path d="M1113.5 272.9L1118.6 275.1L1134.9 267.1L1129.7 264.9Z" fill="#45433d" stroke="#0c0c0b" stroke-width="0.9" /><path d="M1134.9 267.1L1131.4 268.8L1130.7 265.3Z" fill="#8a877e" /><path d="M678.1 376.0L1128.1 626.4L1123.7 718.3L684.4 460.0Z" fill="url(#gFront)" stroke="#0c0c0b" stroke-width="1.2" /><path d="M687.3 383.9L963.9 538.8L963.8 576.3L690.1 419.3Z" fill="#65655f" stroke="#0c0c0b" stroke-width="1.1" /><path d="M687.3 383.9L695.0 389.6L697.1 416.4L690.1 419.3Z" fill="#5c5b55" stroke="#0c0c0b" stroke-width="1" /><path d="M694.9 389.3L703.7 394.2L705.7 421.3L697.1 416.4Z" fill="#6f706b" stroke="#0c0c0b" stroke-width="1" /><path d="M703.6 394.0L709.8 397.5L711.9 424.8L705.7 421.3Z" fill="#686963" stroke="#0c0c0b" stroke-width="1" /><path d="M709.8 397.0L805.6 450.7L806.9 479.1L711.9 424.8Z" fill="url(#gCover)" stroke="#0c0c0b" stroke-width="1.1" /><path d="M805.6 450.7L811.5 454.0L812.8 482.9L806.9 479.6Z" fill="#686862" stroke="#0c0c0b" stroke-width="1" /><path d="M811.5 454.0L831.1 465.0L832.4 497.5L813.0 486.4Z" fill="#71726d" stroke="#0c0c0b" stroke-width="1" /><path d="M831.1 465.0L835.1 467.2L836.3 498.8L832.3 496.5Z" fill="#5f5e59" stroke="#0c0c0b" stroke-width="1" /><path d="M835.1 467.2L841.6 470.8L842.7 501.0L836.3 497.3Z" fill="#6c6d67" stroke="#0c0c0b" stroke-width="1" /><path d="M841.6 470.3L947.5 529.7L947.6 559.9L842.7 500.0Z" fill="url(#gCover)" stroke="#0c0c0b" stroke-width="1.1" /><path d="M947.5 529.7L955.5 534.1L955.5 563.9L947.6 559.4Z" fill="#696963" stroke="#0c0c0b" stroke-width="1" /><path d="M955.5 534.1L963.9 538.8L963.8 568.7L955.5 563.9Z" fill="#71726d" stroke="#0c0c0b" stroke-width="1" /><path d="M690.1 419.3L697.1 416.4L963.8 568.7L963.8 576.3Z" fill="#827c70" stroke="#0c0c0b" stroke-width="1" /><path d="M812.5 475.5L831.9 486.6L832.4 497.5L813.0 486.4Z" fill="#71726d" /><path d="M812.5 475.5 L813.0 486.4 L832.4 497.5 L831.9 486.6" stroke="#0c0c0b" stroke-width="1.0" fill="none"/><path d="M694.2 465.4 L692.1 439.0 L969.9 600.5" stroke="#0c0c0b" stroke-width="0.9" fill="none"/><path d="M692.1 439.0L697.4 442.6L699.5 468.5L694.2 465.4Z" fill="#595853" stroke="#0c0c0b" stroke-width="1" /><path d="M702.8 450.7L724.4 463.3L725.9 483.2L704.4 470.5Z" fill="#4a4944" stroke="#0c0c0b" stroke-width="1" /><path d="M702.8 450.7L724.4 463.3L724.9 470.0L707.6 459.9Z" fill="#5d5c56" /><path d="M705.1 457.4L720.1 466.3L715.1 469.1L700.1 460.2Z" fill="#b9b4a8" stroke="#0c0c0b" stroke-width="0.9" /><path d="M720.1 466.3L720.8 475.7L715.8 478.5L715.1 469.1Z" fill="#8e8a80" stroke="#0c0c0b" stroke-width="0.9" /><path d="M700.1 460.2L715.1 469.1L715.8 478.5L700.8 469.7Z" fill="#a9a59a" stroke="#0c0c0b" stroke-width="0.9" /><path d="M706.8 449.0L711.1 451.5L711.4 454.8L707.1 452.3Z" fill="#6d6c66" stroke="#0c0c0b" stroke-width="0.9" /><path d="M790.0 482.5L809.9 494.0L808.3 494.9L788.4 483.4Z" fill="#8c897f" stroke="#0c0c0b" stroke-width="0.9" /><path d="M809.9 494.0L810.2 501.1L808.6 502.0L808.3 494.9Z" fill="#5e5d57" stroke="#0c0c0b" stroke-width="0.9" /><path d="M788.4 483.4L808.3 494.9L808.6 502.0L788.7 490.5Z" fill="#74736d" stroke="#0c0c0b" stroke-width="1" /><path d="M942.5 570.4L963.4 582.4L961.8 583.3L940.9 571.3Z" fill="#8c897f" stroke="#0c0c0b" stroke-width="0.9" /><path d="M963.4 582.4L963.4 589.7L961.8 590.6L961.8 583.3Z" fill="#5e5d57" stroke="#0c0c0b" stroke-width="0.9" /><path d="M940.9 571.3L961.8 583.3L961.8 590.6L940.9 578.5Z" fill="#74736d" stroke="#0c0c0b" stroke-width="1" /><path d="M774.8 493.2L796.1 505.6L796.8 517.7L794.6 518.7L777.9 508.9L775.5 505.2Z" fill="#2e2d2a" stroke="#0c0c0b" stroke-width="1" /><path d="M778.0 497.4L794.0 506.7L794.4 514.4L782.9 507.7Z" fill="#3c3b37" /><path d="M778.0 497.4L782.9 507.7L779.3 508.3Z" fill="#22211f" /><path d="M814.3 516.2L835.9 528.8L836.4 541.0L834.1 542.0L817.3 532.1L814.9 528.3Z" fill="#2e2d2a" stroke="#0c0c0b" stroke-width="1" /><path d="M817.5 520.5L833.6 529.9L833.9 537.6L822.6 531.0Z" fill="#3c3b37" /><path d="M817.5 520.5L822.6 531.0L818.8 531.6Z" fill="#22211f" /><path d="M858.2 539.4L875.2 549.4L875.8 570.8L858.9 560.9Z" fill="#5b5a55" stroke="#0c0c0b" stroke-width="1" /><path d="M858.2 539.4L875.2 549.4L875.4 555.3L862.0 547.4L862.5 563.0L858.9 560.9Z" fill="#6e6d67" stroke="#0c0c0b" stroke-width="0.6" /><path d="M864.1 551.5L872.2 556.3L872.4 565.1L864.4 560.3Z" fill="#8b877d" stroke="#0c0c0b" stroke-width="0.9" /><path d="M864.1 551.5L872.2 556.3L870.7 557.2L862.6 552.4Z" fill="#a09c91" stroke="#0c0c0b" stroke-width="0.5" /><g filter="url(#blur4)" opacity="0.45"><ellipse cx="742" cy="519" rx="24" ry="5" transform="rotate(-20 742 519)" fill="#888"/></g><path d="M722.3 490.8L722.3 488.4L722.8 486.4L723.7 484.8L725.0 483.9L741.4 475.6L743.0 475.3L744.8 475.5L746.8 476.4L748.8 477.8L750.7 479.8L752.5 482.1L754.0 484.7L755.2 487.5L756.0 490.3L756.4 493.0L756.3 495.4L755.8 497.4L754.9 499.0L753.6 499.9L737.2 508.3L735.6 508.6L733.8 508.4L731.9 507.5L729.9 506.0L728.0 504.1L726.2 501.7L724.7 499.1L723.5 496.3L722.7 493.5Z" fill="url(#gKnob)" stroke="#0c0c0b" stroke-width="0.8" /><path d="M740.0 501.3L739.6 498.7L738.7 495.8L737.5 493.0L736.0 490.4L734.2 488.0L732.3 486.1L730.3 484.6L728.3 483.7L726.5 483.5L725.0 483.9L723.7 484.8L722.8 486.4L722.3 488.4L722.3 490.8L722.7 493.5L723.5 496.3L724.7 499.1L726.2 501.7L728.0 504.0L729.9 506.0L731.9 507.5L733.8 508.3L735.6 508.6L737.2 508.3L738.5 507.3L739.4 505.8L739.9 503.8Z" fill="#5a5852" stroke="#0c0c0b" stroke-width="0.8" /><path d="M713.7 493.4L713.8 490.5L714.3 488.1L715.4 486.3L716.9 485.1L723.8 481.6L725.7 481.2L727.8 481.5L730.1 482.5L732.5 484.2L734.8 486.5L736.9 489.3L738.7 492.5L740.1 495.8L741.1 499.1L741.6 502.3L741.5 505.2L741.0 507.6L739.9 509.4L738.4 510.5L731.4 514.0L729.5 514.5L727.4 514.1L725.1 513.1L722.8 511.3L720.5 509.0L718.4 506.2L716.6 503.1L715.2 499.8L714.2 496.5Z" fill="url(#gKnob)" stroke="#0c0c0b" stroke-width="0.8" /><path d="M734.6 505.9L734.1 502.7L733.2 499.3L731.7 496.0L729.9 492.9L727.8 490.0L725.5 487.7L723.1 486.0L720.8 484.9L718.7 484.6L716.8 485.1L715.4 486.3L714.3 488.1L713.8 490.5L713.7 493.4L714.2 496.5L715.2 499.8L716.6 503.1L718.4 506.2L720.5 509.0L722.8 511.3L725.1 513.1L727.4 514.1L729.5 514.5L731.4 514.1L732.9 512.9L734.0 511.1L734.6 508.7Z" fill="#66635c" stroke="#0c0c0b" stroke-width="0.8" /><path d="M732.6 504.7L732.2 502.1L731.4 499.4L730.3 496.7L728.8 494.1L727.1 491.9L725.2 490.0L723.3 488.6L721.5 487.7L719.7 487.5L718.2 487.8L717.0 488.8L716.2 490.3L715.7 492.2L715.7 494.5L716.1 497.1L716.9 499.8L718.0 502.4L719.5 505.0L721.2 507.2L723.0 509.1L724.9 510.5L726.8 511.4L728.5 511.6L730.0 511.3L731.2 510.4L732.1 508.9L732.6 507.0Z" fill="#9a978e" stroke="#0c0c0b" stroke-width="0.6" /><path d="M731.1 503.8L730.8 501.6L730.2 499.4L729.2 497.2L728.0 495.1L726.6 493.2L725.1 491.7L723.5 490.5L721.9 489.8L720.5 489.6L719.3 489.9L718.3 490.7L717.6 491.9L717.2 493.5L717.2 495.4L717.5 497.5L718.1 499.7L719.1 502.0L720.3 504.0L721.7 505.9L723.2 507.5L724.8 508.6L726.3 509.3L727.7 509.5L729.0 509.3L730.0 508.5L730.7 507.3L731.1 505.7Z" fill="#6c6962" /><path d="M713.2 502.7L713.2 502.1L713.3 501.6L713.5 501.2L713.8 500.9L722.6 496.5L723.0 496.4L723.4 496.5L723.9 496.7L724.4 497.1L724.9 497.6L725.4 498.2L725.7 498.8L726.0 499.5L726.2 500.2L726.3 500.9L726.3 501.5L726.2 502.0L726.0 502.4L725.7 502.6L716.9 507.1L716.5 507.1L716.1 507.1L715.6 506.9L715.1 506.5L714.6 506.0L714.2 505.4L713.8 504.7L713.5 504.0L713.3 503.3Z" fill="#5a5852" stroke="#0c0c0b" stroke-width="0.8" /><path d="M717.6 505.3L717.5 504.6L717.3 503.9L717.0 503.2L716.6 502.6L716.1 502.0L715.7 501.5L715.2 501.1L714.7 500.9L714.2 500.8L713.8 500.9L713.5 501.2L713.3 501.6L713.2 502.1L713.2 502.7L713.3 503.3L713.5 504.0L713.8 504.7L714.2 505.4L714.6 506.0L715.1 506.5L715.6 506.9L716.1 507.1L716.5 507.1L716.9 507.1L717.2 506.8L717.5 506.4L717.6 505.9Z" fill="#3a3935" stroke="#0c0c0b" stroke-width="0.8" /><path d="M977.2 556.7L1108.9 630.9L1105.2 707.4L976.8 631.5Z" fill="#65645e" stroke="#0c0c0b" stroke-width="1.1" /><path d="M977.2 556.7L981.2 560.5L980.7 632.8L976.8 631.5Z" fill="#54534e" stroke="#0c0c0b" stroke-width="0.9" /><path d="M981.2 560.5L1108.3 632.3L1106.5 668.8L981.0 596.3Z" fill="url(#gFdd)" stroke="#0c0c0b" stroke-width="1.1" /><path d="M988.5 568.8L1100.0 631.9L1099.3 647.6L988.3 584.2Z" fill="#4b4842" stroke="#0c0c0b" stroke-width="1.1" /><path d="M988.5 568.8L1100.0 631.9L1099.8 636.6L994.2 576.7Z" fill="#5a554b" /><path d="M994.7 576.4L1099.8 636.1L1099.3 647.6L989.1 584.7Z" fill="#75756f" stroke="#0c0c0b" stroke-width="0.9" /><path d="M999.4 597.2L1007.5 601.9L1007.5 606.0L999.3 601.3Z" fill="#74736d" stroke="#0c0c0b" stroke-width="0.9" /><path d="M1080.1 643.0L1098.3 653.5L1096.3 654.6L1078.1 644.1Z" fill="#8f8b80" stroke="#0c0c0b" stroke-width="0.9" /><path d="M1098.3 653.5L1098.0 661.2L1096.0 662.3L1096.3 654.6Z" fill="#55544f" stroke="#0c0c0b" stroke-width="0.9" /><path d="M1078.1 644.1L1096.3 654.6L1096.0 662.3L1077.8 651.8Z" fill="#7a7972" stroke="#0c0c0b" stroke-width="1" /><path d="M981.0 596.8L1106.5 669.3L1104.7 706.1L980.7 632.8Z" fill="url(#gFdd)" stroke="#0c0c0b" stroke-width="1.1" /><path d="M988.1 606.1L1098.3 669.9L1097.5 685.7L988.0 621.6Z" fill="#4b4842" stroke="#0c0c0b" stroke-width="1.1" /><path d="M988.1 606.1L1098.3 669.9L1098.0 674.5L993.8 613.9Z" fill="#5a554b" /><path d="M994.2 613.7L1098.1 674.0L1097.5 685.7L988.8 622.1Z" fill="#75756f" stroke="#0c0c0b" stroke-width="0.9" /><path d="M998.9 634.1L1007.0 638.8L1006.9 643.3L998.9 638.5Z" fill="#74736d" stroke="#0c0c0b" stroke-width="0.9" /><path d="M1078.6 680.3L1096.6 690.9L1094.6 692.0L1076.6 681.4Z" fill="#8f8b80" stroke="#0c0c0b" stroke-width="0.9" /><path d="M1096.6 690.9L1096.3 698.5L1094.3 699.6L1094.6 692.0Z" fill="#55544f" stroke="#0c0c0b" stroke-width="0.9" /><path d="M1076.6 681.4L1094.6 692.0L1094.3 699.6L1076.3 689.0Z" fill="#7a7972" stroke="#0c0c0b" stroke-width="1" /><g filter="url(#blur12)"><path d="M361.1 625.1L810.5 965.4L1046.8 812.7L591.2 521.0Z" fill="#a2a2a2" /></g><path d="M350.9 602.3L807.5 944.8L808.5 963.9L354.3 620.0Z" fill="#5e5c56" stroke="#0a0a09" stroke-width="1" /><path d="M350.9 602.3L807.5 944.8L807.8 949.6L351.8 606.8Z" fill="#8a867c" stroke="#0a0a09" stroke-width="1.1" /><path d="M351.8 606.8L807.8 949.6L807.9 952.3L352.3 609.3Z" fill="#a09c91" /><path d="M352.3 609.3 L807.9 952.3" stroke="#0a0a09" stroke-width="0.8"/><path d="M807.5 944.8 L1040.1 761.6 L1043.7 787.5 Q925 893.5 810 963.7 Z" fill="#524e47" stroke="#0a0a09" stroke-width="1.1"/><path d="M350.9 602.3L807.5 944.8L1040.1 761.6L572.3 469.8Z" fill="url(#gPlate)" stroke="#0a0a09" stroke-width="1" /><path d="M394.9 588.4L826.8 903.1L1016.0 755.6L575.6 479.5Z" fill="#9d998d" stroke="#0a0a09" stroke-width="1" /><path d="M399.6 587.8L827.1 898.4L1010.6 755.6L575.1 482.0Z" fill="url(#gPlate)" stroke="#0a0a09" stroke-width="1.1" /><path d="M543.6 504.2L690.8 599.4L721.3 579.3L573.5 486.2Z" fill="#7f7b71" stroke="#0a0a09" stroke-width="1.1" /><path d="M695.8 602.6L863.6 711.0L894.4 688.5L726.3 582.5Z" fill="#7f7b71" stroke="#0a0a09" stroke-width="1.1" /><path d="M790.1 768.5L891.6 838.2L999.0 755.0L896.9 690.6Z" fill="#7f7b71" stroke="#0a0a09" stroke-width="1.1" /><path d="M727.5 814.0L804.4 869.4L864.1 823.8L786.9 770.6Z" fill="#7f7b71" stroke="#0a0a09" stroke-width="1.1" /><path d="M539.4 505.8L859.0 713.0L834.1 731.1L827.3 726.6L770.2 768.0L777.5 773.0L751.3 792.1L686.1 746.0L659.7 764.5L441.2 606.8L466.8 591.1L436.1 569.3L516.2 521.0L515.3 520.4Z" fill="#7f7b71" stroke="#0a0a09" stroke-width="1.1" /><path d="M548.6 503.9L575.8 521.4L600.2 506.5L587.8 496.3L568.5 484.1L553.7 493.0Z" fill="#60615d" /><path d="M548.6 503.9L575.8 521.4L573.0 505.3L553.7 493.0Z" fill="url(#gKF)" stroke="#0a0a09" stroke-width="1.1" /><path d="M575.8 521.4L600.2 506.5L587.8 496.3L573.0 505.3Z" fill="url(#gKR)" stroke="#0a0a09" stroke-width="1.1" /><path d="M553.7 493.0L573.0 505.3L587.8 496.3L568.5 484.1Z" fill="#8f8b80" stroke="#0a0a09" stroke-width="1.1" /><path d="M514.5 523.5L532.6 535.4L556.7 520.7L544.9 510.2L534.4 503.4L519.5 512.3Z" fill="#60615d" /><path d="M514.5 523.5L532.6 535.4L530.1 519.2L519.5 512.3Z" fill="url(#gKF)" stroke="#0a0a09" stroke-width="1.1" /><path d="M532.6 535.4L556.7 520.7L544.9 510.2L530.1 519.2Z" fill="url(#gKR)" stroke="#0a0a09" stroke-width="1.1" /><path d="M519.5 512.3L530.1 519.2L544.9 510.2L534.4 503.4Z" fill="#8f8b80" stroke="#0a0a09" stroke-width="1.1" /><path d="M575.8 521.4L603.7 539.4L628.1 524.1L615.7 513.9L595.9 501.4L581.1 510.5Z" fill="#60615d" /><path d="M575.8 521.4L603.7 539.4L600.8 523.1L581.1 510.5Z" fill="url(#gKF)" stroke="#0a0a09" stroke-width="1.1" /><path d="M603.7 539.4L628.1 524.1L615.7 513.9L600.8 523.1Z" fill="url(#gKR)" stroke="#0a0a09" stroke-width="1.1" /><path d="M581.1 510.5L600.8 523.1L615.7 513.9L595.9 501.4Z" fill="#8f8b80" stroke="#0a0a09" stroke-width="1.1" /><path d="M532.6 535.4L550.9 547.5L575.1 532.6L563.3 522.1L552.6 515.2L537.7 524.2Z" fill="#60615d" /><path d="M532.6 535.4L550.9 547.5L548.4 531.3L537.7 524.2Z" fill="url(#gKF)" stroke="#0a0a09" stroke-width="1.1" /><path d="M550.9 547.5L575.1 532.6L563.3 522.1L548.4 531.3Z" fill="url(#gKR)" stroke="#0a0a09" stroke-width="1.1" /><path d="M537.7 524.2L548.4 531.3L563.3 522.1L552.6 515.2Z" fill="#8f8b80" stroke="#0a0a09" stroke-width="1.1" /><path d="M490.8 538.7L517.3 556.6L541.8 541.5L529.8 531.1L510.8 518.5L495.7 527.5Z" fill="#60615d" /><path d="M490.8 538.7L517.3 556.6L514.7 540.3L495.7 527.5Z" fill="url(#gKF)" stroke="#0a0a09" stroke-width="1.1" /><path d="M517.3 556.6L541.8 541.5L529.8 531.1L514.7 540.3Z" fill="url(#gKR)" stroke="#0a0a09" stroke-width="1.1" /><path d="M495.7 527.5L514.7 540.3L529.8 531.1L510.8 518.5Z" fill="#8f8b80" stroke="#0a0a09" stroke-width="1.1" /><path d="M603.7 539.4L632.2 557.8L656.7 542.2L644.3 531.9L624.0 519.2L609.2 528.4Z" fill="#60615d" /><path d="M603.7 539.4L632.2 557.8L629.4 541.3L609.2 528.4Z" fill="url(#gKF)" stroke="#0a0a09" stroke-width="1.1" /><path d="M632.2 557.8L656.7 542.2L644.3 531.9L629.4 541.3Z" fill="url(#gKR)" stroke="#0a0a09" stroke-width="1.1" /><path d="M609.2 528.4L629.4 541.3L644.3 531.9L624.0 519.2Z" fill="#8f8b80" stroke="#0a0a09" stroke-width="1.1" /><path d="M550.9 547.5L569.5 559.9L593.7 544.7L581.9 534.2L571.0 527.1L556.1 536.3Z" fill="#60615d" /><path d="M550.9 547.5L569.5 559.9L567.0 543.5L556.1 536.3Z" fill="url(#gKF)" stroke="#0a0a09" stroke-width="1.1" /><path d="M569.5 559.9L593.7 544.7L581.9 534.2L567.0 543.5Z" fill="url(#gKR)" stroke="#0a0a09" stroke-width="1.1" /><path d="M556.1 536.3L567.0 543.5L581.9 534.2L571.0 527.1Z" fill="#8f8b80" stroke="#0a0a09" stroke-width="1.1" /><path d="M466.7 554.2L496.7 574.8L521.6 559.5L509.4 549.0L486.9 533.8L471.6 543.0Z" fill="#60615d" /><path d="M466.7 554.2L496.7 574.8L494.1 558.4L471.6 543.0Z" fill="url(#gKF)" stroke="#0a0a09" stroke-width="1.1" /><path d="M496.7 574.8L521.6 559.5L509.4 549.0L494.1 558.4Z" fill="url(#gKR)" stroke="#0a0a09" stroke-width="1.1" /><path d="M471.6 543.0L494.1 558.4L509.4 549.0L486.9 533.8Z" fill="#8f8b80" stroke="#0a0a09" stroke-width="1.1" /><path d="M517.3 556.6L535.7 569.0L560.2 553.8L548.3 543.3L537.5 536.1L522.4 545.4Z" fill="#60615d" /><path d="M517.3 556.6L535.7 569.0L533.1 552.6L522.4 545.4Z" fill="url(#gKF)" stroke="#0a0a09" stroke-width="1.1" /><path d="M535.7 569.0L560.2 553.8L548.3 543.3L533.1 552.6Z" fill="url(#gKR)" stroke="#0a0a09" stroke-width="1.1" /><path d="M522.4 545.4L533.1 552.6L548.3 543.3L537.5 536.1Z" fill="#8f8b80" stroke="#0a0a09" stroke-width="1.1" /><path d="M569.5 559.9L588.3 572.4L612.7 557.0L600.9 546.5L589.8 539.3L574.8 548.6Z" fill="#60615d" /><path d="M569.5 559.9L588.3 572.4L585.9 555.9L574.8 548.6Z" fill="url(#gKF)" stroke="#0a0a09" stroke-width="1.1" /><path d="M588.3 572.4L612.7 557.0L600.9 546.5L585.9 555.9Z" fill="url(#gKR)" stroke="#0a0a09" stroke-width="1.1" /><path d="M574.8 548.6L585.9 555.9L600.9 546.5L589.8 539.3Z" fill="#8f8b80" stroke="#0a0a09" stroke-width="1.1" /><path d="M632.2 557.8L661.4 576.6L686.0 560.7L673.5 550.4L652.8 537.3L637.9 546.8Z" fill="#60615d" /><path d="M632.2 557.8L661.4 576.6L658.6 560.0L637.9 546.8Z" fill="url(#gKF)" stroke="#0a0a09" stroke-width="1.1" /><path d="M661.4 576.6L686.0 560.7L673.5 550.4L658.6 560.0Z" fill="url(#gKR)" stroke="#0a0a09" stroke-width="1.1" /><path d="M637.9 546.8L658.6 560.0L673.5 550.4L652.8 537.3Z" fill="#8f8b80" stroke="#0a0a09" stroke-width="1.1" /><path d="M535.7 569.0L554.3 581.7L579.0 566.2L567.0 555.6L556.0 548.4L540.9 557.8Z" fill="#60615d" /><path d="M535.7 569.0L554.3 581.7L551.8 565.1L540.9 557.8Z" fill="url(#gKF)" stroke="#0a0a09" stroke-width="1.1" /><path d="M554.3 581.7L579.0 566.2L567.0 555.6L551.8 565.1Z" fill="url(#gKR)" stroke="#0a0a09" stroke-width="1.1" /><path d="M540.9 557.8L551.8 565.1L567.0 555.6L556.0 548.4Z" fill="#8f8b80" stroke="#0a0a09" stroke-width="1.1" /><path d="M441.1 569.0L480.8 596.9L506.1 581.3L493.7 570.8L461.4 548.5L445.9 557.8Z" fill="#60615d" /><path d="M441.1 569.0L480.8 596.9L478.2 580.3L445.9 557.8Z" fill="url(#gKF)" stroke="#0a0a09" stroke-width="1.1" /><path d="M480.8 596.9L506.1 581.3L493.7 570.8L478.2 580.3Z" fill="url(#gKR)" stroke="#0a0a09" stroke-width="1.1" /><path d="M445.9 557.8L478.2 580.3L493.7 570.8L461.4 548.5Z" fill="#8f8b80" stroke="#0a0a09" stroke-width="1.1" /><path d="M496.7 574.8L515.1 587.5L540.0 572.0L527.9 561.5L517.1 554.2L501.7 563.6Z" fill="#60615d" /><path d="M496.7 574.8L515.1 587.5L512.5 570.9L501.7 563.6Z" fill="url(#gKF)" stroke="#0a0a09" stroke-width="1.1" /><path d="M515.1 587.5L540.0 572.0L527.9 561.5L512.5 570.9Z" fill="url(#gKR)" stroke="#0a0a09" stroke-width="1.1" /><path d="M501.7 563.6L512.5 570.9L527.9 561.5L517.1 554.2Z" fill="#8f8b80" stroke="#0a0a09" stroke-width="1.1" /><path d="M588.3 572.4L607.5 585.1L631.9 569.5L620.1 559.0L608.8 551.7L593.8 561.1Z" fill="#60615d" /><path d="M588.3 572.4L607.5 585.1L605.1 568.5L593.8 561.1Z" fill="url(#gKF)" stroke="#0a0a09" stroke-width="1.1" /><path d="M607.5 585.1L631.9 569.5L620.1 559.0L605.1 568.5Z" fill="url(#gKR)" stroke="#0a0a09" stroke-width="1.1" /><path d="M593.8 561.1L605.1 568.5L620.1 559.0L608.8 551.7Z" fill="#8f8b80" stroke="#0a0a09" stroke-width="1.1" /><path d="M554.3 581.7L573.3 594.5L598.0 578.8L586.0 568.2L574.9 560.9L559.7 570.4Z" fill="#60615d" /><path d="M554.3 581.7L573.3 594.5L570.8 577.8L559.7 570.4Z" fill="url(#gKF)" stroke="#0a0a09" stroke-width="1.1" /><path d="M573.3 594.5L598.0 578.8L586.0 568.2L570.8 577.8Z" fill="url(#gKR)" stroke="#0a0a09" stroke-width="1.1" /><path d="M559.7 570.4L570.8 577.8L586.0 568.2L574.9 560.9Z" fill="#8f8b80" stroke="#0a0a09" stroke-width="1.1" /><path d="M515.1 587.5L533.8 600.4L558.8 584.7L546.6 574.1L535.6 566.7L520.3 576.3Z" fill="#60615d" /><path d="M515.1 587.5L533.8 600.4L531.2 583.7L520.3 576.3Z" fill="url(#gKF)" stroke="#0a0a09" stroke-width="1.1" /><path d="M533.8 600.4L558.8 584.7L546.6 574.1L531.2 583.7Z" fill="url(#gKR)" stroke="#0a0a09" stroke-width="1.1" /><path d="M520.3 576.3L531.2 583.7L546.6 574.1L535.6 566.7Z" fill="#8f8b80" stroke="#0a0a09" stroke-width="1.1" /><path d="M661.4 576.6L691.3 595.9L716.1 579.7L703.5 569.3L682.3 555.9L667.3 565.6Z" fill="#60615d" /><path d="M661.4 576.6L691.3 595.9L688.5 579.1L667.3 565.6Z" fill="url(#gKF)" stroke="#0a0a09" stroke-width="1.1" /><path d="M691.3 595.9L716.1 579.7L703.5 569.3L688.5 579.1Z" fill="url(#gKR)" stroke="#0a0a09" stroke-width="1.1" /><path d="M667.3 565.6L688.5 579.1L703.5 569.3L682.3 555.9Z" fill="#8f8b80" stroke="#0a0a09" stroke-width="1.1" /><path d="M607.5 585.1L627.0 598.0L651.5 582.2L639.6 571.6L628.2 564.2L613.2 573.8Z" fill="#60615d" /><path d="M607.5 585.1L627.0 598.0L624.6 581.3L613.2 573.8Z" fill="url(#gKF)" stroke="#0a0a09" stroke-width="1.1" /><path d="M627.0 598.0L651.5 582.2L639.6 571.6L624.6 581.3Z" fill="url(#gKR)" stroke="#0a0a09" stroke-width="1.1" /><path d="M613.2 573.8L624.6 581.3L639.6 571.6L628.2 564.2Z" fill="#8f8b80" stroke="#0a0a09" stroke-width="1.1" /><path d="M480.8 596.9L499.2 610.0L524.6 594.1L512.2 583.5L501.4 576.1L485.8 585.7Z" fill="#60615d" /><path d="M480.8 596.9L499.2 610.0L496.6 593.2L485.8 585.7Z" fill="url(#gKF)" stroke="#0a0a09" stroke-width="1.1" /><path d="M499.2 610.0L524.6 594.1L512.2 583.5L496.6 593.2Z" fill="url(#gKR)" stroke="#0a0a09" stroke-width="1.1" /><path d="M485.8 585.7L496.6 593.2L512.2 583.5L501.4 576.1Z" fill="#8f8b80" stroke="#0a0a09" stroke-width="1.1" /><path d="M573.3 594.5L592.6 607.5L617.4 591.6L605.3 581.0L594.0 573.5L578.8 583.2Z" fill="#60615d" /><path d="M573.3 594.5L592.6 607.5L590.1 590.7L578.8 583.2Z" fill="url(#gKF)" stroke="#0a0a09" stroke-width="1.1" /><path d="M592.6 607.5L617.4 591.6L605.3 581.0L590.1 590.7Z" fill="url(#gKR)" stroke="#0a0a09" stroke-width="1.1" /><path d="M578.8 583.2L590.1 590.7L605.3 581.0L594.0 573.5Z" fill="#8f8b80" stroke="#0a0a09" stroke-width="1.1" /><path d="M533.8 600.4L552.7 613.5L577.8 597.6L565.6 587.0L554.5 579.4L539.1 589.1Z" fill="#60615d" /><path d="M533.8 600.4L552.7 613.5L550.2 596.7L539.1 589.1Z" fill="url(#gKF)" stroke="#0a0a09" stroke-width="1.1" /><path d="M552.7 613.5L577.8 597.6L565.6 587.0L550.2 596.7Z" fill="url(#gKR)" stroke="#0a0a09" stroke-width="1.1" /><path d="M539.1 589.1L550.2 596.7L565.6 587.0L554.5 579.4Z" fill="#8f8b80" stroke="#0a0a09" stroke-width="1.1" /><path d="M446.4 606.5L464.1 619.3L489.8 603.3L477.3 592.8L467.0 585.5L451.2 595.2Z" fill="#60615d" /><path d="M446.4 606.5L464.1 619.3L461.5 602.5L451.2 595.2Z" fill="url(#gKF)" stroke="#0a0a09" stroke-width="1.1" /><path d="M464.1 619.3L489.8 603.3L477.3 592.8L461.5 602.5Z" fill="url(#gKR)" stroke="#0a0a09" stroke-width="1.1" /><path d="M451.2 595.2L461.5 602.5L477.3 592.8L467.0 585.5Z" fill="#8f8b80" stroke="#0a0a09" stroke-width="1.1" /><path d="M627.0 598.0L646.9 611.2L671.4 595.2L659.5 584.5L647.9 577.0L632.8 586.7Z" fill="#60615d" /><path d="M627.0 598.0L646.9 611.2L644.4 594.3L632.8 586.7Z" fill="url(#gKF)" stroke="#0a0a09" stroke-width="1.1" /><path d="M646.9 611.2L671.4 595.2L659.5 584.5L644.4 594.3Z" fill="url(#gKR)" stroke="#0a0a09" stroke-width="1.1" /><path d="M632.8 586.7L644.4 594.3L659.5 584.5L647.9 577.0Z" fill="#8f8b80" stroke="#0a0a09" stroke-width="1.1" /><path d="M499.2 610.0L518.0 623.2L543.4 607.1L531.0 596.5L520.0 588.9L504.4 598.7Z" fill="#60615d" /><path d="M499.2 610.0L518.0 623.2L515.4 606.3L504.4 598.7Z" fill="url(#gKF)" stroke="#0a0a09" stroke-width="1.1" /><path d="M518.0 623.2L543.4 607.1L531.0 596.5L515.4 606.3Z" fill="url(#gKR)" stroke="#0a0a09" stroke-width="1.1" /><path d="M504.4 598.7L515.4 606.3L531.0 596.5L520.0 588.9Z" fill="#8f8b80" stroke="#0a0a09" stroke-width="1.1" /><path d="M592.6 607.5L612.2 620.8L637.1 604.7L625.0 594.0L613.5 586.4L598.2 596.2Z" fill="#60615d" /><path d="M592.6 607.5L612.2 620.8L609.7 603.9L598.2 596.2Z" fill="url(#gKF)" stroke="#0a0a09" stroke-width="1.1" /><path d="M612.2 620.8L637.1 604.7L625.0 594.0L609.7 603.9Z" fill="url(#gKR)" stroke="#0a0a09" stroke-width="1.1" /><path d="M598.2 596.2L609.7 603.9L625.0 594.0L613.5 586.4Z" fill="#8f8b80" stroke="#0a0a09" stroke-width="1.1" /><path d="M552.7 613.5L572.0 626.8L597.2 610.6L585.0 600.0L573.6 592.4L558.2 602.2Z" fill="#60615d" /><path d="M552.7 613.5L572.0 626.8L569.5 609.9L558.2 602.2Z" fill="url(#gKF)" stroke="#0a0a09" stroke-width="1.1" /><path d="M572.0 626.8L597.2 610.6L585.0 600.0L569.5 609.9Z" fill="url(#gKR)" stroke="#0a0a09" stroke-width="1.1" /><path d="M558.2 602.2L569.5 609.9L585.0 600.0L573.6 592.4Z" fill="#8f8b80" stroke="#0a0a09" stroke-width="1.1" /><path d="M464.5 619.5L483.8 633.5L509.6 617.2L497.0 606.7L485.3 598.5L469.5 608.3Z" fill="#60615d" /><path d="M464.5 619.5L483.8 633.5L481.2 616.6L469.5 608.3Z" fill="url(#gKF)" stroke="#0a0a09" stroke-width="1.1" /><path d="M483.8 633.5L509.6 617.2L497.0 606.7L481.2 616.6Z" fill="url(#gKR)" stroke="#0a0a09" stroke-width="1.1" /><path d="M469.5 608.3L481.2 616.6L497.0 606.7L485.3 598.5Z" fill="#8f8b80" stroke="#0a0a09" stroke-width="1.1" /><path d="M701.1 602.2L732.0 622.2L756.9 605.5L744.3 595.0L722.4 581.2L707.3 591.1Z" fill="#60615d" /><path d="M701.1 602.2L732.0 622.2L729.2 605.1L707.3 591.1Z" fill="url(#gKF)" stroke="#0a0a09" stroke-width="1.1" /><path d="M732.0 622.2L756.9 605.5L744.3 595.0L729.2 605.1Z" fill="url(#gKR)" stroke="#0a0a09" stroke-width="1.1" /><path d="M707.3 591.1L729.2 605.1L744.3 595.0L722.4 581.2Z" fill="#8f8b80" stroke="#0a0a09" stroke-width="1.1" /><path d="M646.9 611.2L667.0 624.5L691.6 608.3L679.7 597.6L667.9 589.9L652.8 599.8Z" fill="#60615d" /><path d="M646.9 611.2L667.0 624.5L664.6 607.5L652.8 599.8Z" fill="url(#gKF)" stroke="#0a0a09" stroke-width="1.1" /><path d="M667.0 624.5L691.6 608.3L679.7 597.6L664.6 607.5Z" fill="url(#gKR)" stroke="#0a0a09" stroke-width="1.1" /><path d="M652.8 599.8L664.6 607.5L679.7 597.6L667.9 589.9Z" fill="#8f8b80" stroke="#0a0a09" stroke-width="1.1" /><path d="M518.0 623.2L537.1 636.6L562.6 620.3L550.1 609.7L539.0 602.0L523.3 611.9Z" fill="#60615d" /><path d="M518.0 623.2L537.1 636.6L534.5 619.6L523.3 611.9Z" fill="url(#gKF)" stroke="#0a0a09" stroke-width="1.1" /><path d="M537.1 636.6L562.6 620.3L550.1 609.7L534.5 619.6Z" fill="url(#gKR)" stroke="#0a0a09" stroke-width="1.1" /><path d="M523.3 611.9L534.5 619.6L550.1 609.7L539.0 602.0Z" fill="#8f8b80" stroke="#0a0a09" stroke-width="1.1" /><path d="M612.2 620.8L632.1 634.3L657.0 617.9L645.0 607.2L633.3 599.5L618.0 609.4Z" fill="#60615d" /><path d="M612.2 620.8L632.1 634.3L629.6 617.2L618.0 609.4Z" fill="url(#gKF)" stroke="#0a0a09" stroke-width="1.1" /><path d="M632.1 634.3L657.0 617.9L645.0 607.2L629.6 617.2Z" fill="url(#gKR)" stroke="#0a0a09" stroke-width="1.1" /><path d="M618.0 609.4L629.6 617.2L645.0 607.2L633.3 599.5Z" fill="#8f8b80" stroke="#0a0a09" stroke-width="1.1" /><path d="M572.0 626.8L591.7 640.4L616.9 624.0L604.6 613.3L593.1 605.5L577.6 615.5Z" fill="#60615d" /><path d="M572.0 626.8L591.7 640.4L589.1 623.3L577.6 615.5Z" fill="url(#gKF)" stroke="#0a0a09" stroke-width="1.1" /><path d="M591.7 640.4L616.9 624.0L604.6 613.3L589.1 623.3Z" fill="url(#gKR)" stroke="#0a0a09" stroke-width="1.1" /><path d="M577.6 615.5L589.1 623.3L604.6 613.3L593.1 605.5Z" fill="#8f8b80" stroke="#0a0a09" stroke-width="1.1" /><path d="M667.0 624.5L687.5 638.1L712.1 621.6L700.2 610.9L688.2 603.1L673.1 613.1Z" fill="#60615d" /><path d="M667.0 624.5L687.5 638.1L685.1 621.0L673.1 613.1Z" fill="url(#gKF)" stroke="#0a0a09" stroke-width="1.1" /><path d="M687.5 638.1L712.1 621.6L700.2 610.9L685.1 621.0Z" fill="url(#gKR)" stroke="#0a0a09" stroke-width="1.1" /><path d="M673.1 613.1L685.1 621.0L700.2 610.9L688.2 603.1Z" fill="#8f8b80" stroke="#0a0a09" stroke-width="1.1" /><path d="M537.1 636.6L556.5 650.3L582.0 633.7L569.6 623.1L558.2 615.2L542.5 625.3Z" fill="#60615d" /><path d="M537.1 636.6L556.5 650.3L553.9 633.2L542.5 625.3Z" fill="url(#gKF)" stroke="#0a0a09" stroke-width="1.1" /><path d="M556.5 650.3L582.0 633.7L569.6 623.1L553.9 633.2Z" fill="url(#gKR)" stroke="#0a0a09" stroke-width="1.1" /><path d="M542.5 625.3L553.9 633.2L569.6 623.1L558.2 615.2Z" fill="#8f8b80" stroke="#0a0a09" stroke-width="1.1" /><path d="M732.0 622.2L763.7 642.6L788.6 625.5L776.0 615.1L753.6 600.9L738.5 611.0Z" fill="#60615d" /><path d="M732.0 622.2L763.7 642.6L760.9 625.3L738.5 611.0Z" fill="url(#gKF)" stroke="#0a0a09" stroke-width="1.1" /><path d="M763.7 642.6L788.6 625.5L776.0 615.1L760.9 625.3Z" fill="url(#gKR)" stroke="#0a0a09" stroke-width="1.1" /><path d="M738.5 611.0L760.9 625.3L776.0 615.1L753.6 600.9Z" fill="#8f8b80" stroke="#0a0a09" stroke-width="1.1" /><path d="M632.1 634.3L652.4 648.0L677.4 631.4L665.3 620.7L653.4 612.8L638.0 622.9Z" fill="#60615d" /><path d="M632.1 634.3L652.4 648.0L649.9 630.8L638.0 622.9Z" fill="url(#gKF)" stroke="#0a0a09" stroke-width="1.1" /><path d="M652.4 648.0L677.4 631.4L665.3 620.7L649.9 630.8Z" fill="url(#gKR)" stroke="#0a0a09" stroke-width="1.1" /><path d="M638.0 622.9L649.9 630.8L665.3 620.7L653.4 612.8Z" fill="#8f8b80" stroke="#0a0a09" stroke-width="1.1" /><path d="M591.7 640.4L611.6 654.1L636.9 637.5L624.6 626.8L612.9 618.9L597.4 629.0Z" fill="#60615d" /><path d="M591.7 640.4L611.6 654.1L609.0 637.0L597.4 629.0Z" fill="url(#gKF)" stroke="#0a0a09" stroke-width="1.1" /><path d="M611.6 654.1L636.9 637.5L624.6 626.8L609.0 637.0Z" fill="url(#gKR)" stroke="#0a0a09" stroke-width="1.1" /><path d="M597.4 629.0L609.0 637.0L624.6 626.8L612.9 618.9Z" fill="#8f8b80" stroke="#0a0a09" stroke-width="1.1" /><path d="M687.5 638.1L708.4 651.9L733.0 635.2L721.1 624.5L708.9 616.5L693.7 626.7Z" fill="#60615d" /><path d="M687.5 638.1L708.4 651.9L705.9 634.7L693.7 626.7Z" fill="url(#gKF)" stroke="#0a0a09" stroke-width="1.1" /><path d="M708.4 651.9L733.0 635.2L721.1 624.5L705.9 634.7Z" fill="url(#gKR)" stroke="#0a0a09" stroke-width="1.1" /><path d="M693.7 626.7L705.9 634.7L721.1 624.5L708.9 616.5Z" fill="#8f8b80" stroke="#0a0a09" stroke-width="1.1" /><path d="M556.5 650.3L576.2 664.2L601.8 647.4L589.4 636.7L577.8 628.7L562.0 638.9Z" fill="#60615d" /><path d="M556.5 650.3L576.2 664.2L573.6 647.0L562.0 638.9Z" fill="url(#gKF)" stroke="#0a0a09" stroke-width="1.1" /><path d="M576.2 664.2L601.8 647.4L589.4 636.7L573.6 647.0Z" fill="url(#gKR)" stroke="#0a0a09" stroke-width="1.1" /><path d="M562.0 638.9L573.6 647.0L589.4 636.7L577.8 628.7Z" fill="#8f8b80" stroke="#0a0a09" stroke-width="1.1" /><path d="M652.4 648.0L673.0 661.9L698.0 645.1L685.9 634.3L673.8 626.3L658.5 636.5Z" fill="#60615d" /><path d="M652.4 648.0L673.0 661.9L670.5 644.6L658.5 636.5Z" fill="url(#gKF)" stroke="#0a0a09" stroke-width="1.1" /><path d="M673.0 661.9L698.0 645.1L685.9 634.3L670.5 644.6Z" fill="url(#gKR)" stroke="#0a0a09" stroke-width="1.1" /><path d="M658.5 636.5L670.5 644.6L685.9 634.3L673.8 626.3Z" fill="#8f8b80" stroke="#0a0a09" stroke-width="1.1" /><path d="M611.6 654.1L631.9 668.1L657.2 651.2L644.9 640.5L633.0 632.5L617.5 642.7Z" fill="#60615d" /><path d="M611.6 654.1L631.9 668.1L629.3 650.8L617.5 642.7Z" fill="url(#gKF)" stroke="#0a0a09" stroke-width="1.1" /><path d="M631.9 668.1L657.2 651.2L644.9 640.5L629.3 650.8Z" fill="url(#gKR)" stroke="#0a0a09" stroke-width="1.1" /><path d="M617.5 642.7L629.3 650.8L644.9 640.5L633.0 632.5Z" fill="#8f8b80" stroke="#0a0a09" stroke-width="1.1" /><path d="M763.7 642.6L796.2 663.5L821.2 646.1L808.6 635.6L785.5 621.1L770.4 631.4Z" fill="#60615d" /><path d="M763.7 642.6L796.2 663.5L793.4 646.1L770.4 631.4Z" fill="url(#gKF)" stroke="#0a0a09" stroke-width="1.1" /><path d="M796.2 663.5L821.2 646.1L808.6 635.6L793.4 646.1Z" fill="url(#gKR)" stroke="#0a0a09" stroke-width="1.1" /><path d="M770.4 631.4L793.4 646.1L808.6 635.6L785.5 621.1Z" fill="#8f8b80" stroke="#0a0a09" stroke-width="1.1" /><path d="M708.4 651.9L729.5 665.9L754.3 649.0L742.3 638.2L729.9 630.2L714.7 640.4Z" fill="#60615d" /><path d="M708.4 651.9L729.5 665.9L727.1 648.6L714.7 640.4Z" fill="url(#gKF)" stroke="#0a0a09" stroke-width="1.1" /><path d="M729.5 665.9L754.3 649.0L742.3 638.2L727.1 648.6Z" fill="url(#gKR)" stroke="#0a0a09" stroke-width="1.1" /><path d="M714.7 640.4L727.1 648.6L742.3 638.2L729.9 630.2Z" fill="#8f8b80" stroke="#0a0a09" stroke-width="1.1" /><path d="M576.2 664.2L596.2 678.3L621.9 661.3L609.4 650.6L597.7 642.5L581.9 652.8Z" fill="#60615d" /><path d="M576.2 664.2L596.2 678.3L593.6 661.0L581.9 652.8Z" fill="url(#gKF)" stroke="#0a0a09" stroke-width="1.1" /><path d="M596.2 678.3L621.9 661.3L609.4 650.6L593.6 661.0Z" fill="url(#gKR)" stroke="#0a0a09" stroke-width="1.1" /><path d="M581.9 652.8L593.6 661.0L609.4 650.6L597.7 642.5Z" fill="#8f8b80" stroke="#0a0a09" stroke-width="1.1" /><path d="M673.0 661.9L694.0 676.1L719.0 659.0L706.9 648.2L694.6 640.1L679.2 650.4Z" fill="#60615d" /><path d="M673.0 661.9L694.0 676.1L691.5 658.7L679.2 650.4Z" fill="url(#gKF)" stroke="#0a0a09" stroke-width="1.1" /><path d="M694.0 676.1L719.0 659.0L706.9 648.2L691.5 658.7Z" fill="url(#gKR)" stroke="#0a0a09" stroke-width="1.1" /><path d="M679.2 650.4L691.5 658.7L706.9 648.2L694.6 640.1Z" fill="#8f8b80" stroke="#0a0a09" stroke-width="1.1" /><path d="M631.9 668.1L652.5 682.4L677.9 665.2L665.6 654.5L653.5 646.3L637.9 656.7Z" fill="#60615d" /><path d="M631.9 668.1L652.5 682.4L650.0 665.0L637.9 656.7Z" fill="url(#gKF)" stroke="#0a0a09" stroke-width="1.1" /><path d="M652.5 682.4L677.9 665.2L665.6 654.5L650.0 665.0Z" fill="url(#gKR)" stroke="#0a0a09" stroke-width="1.1" /><path d="M637.9 656.7L650.0 665.0L665.6 654.5L653.5 646.3Z" fill="#8f8b80" stroke="#0a0a09" stroke-width="1.1" /><path d="M729.5 665.9L751.1 680.2L775.9 663.0L763.9 652.2L751.3 644.0L736.1 654.4Z" fill="#60615d" /><path d="M729.5 665.9L751.1 680.2L748.7 662.7L736.1 654.4Z" fill="url(#gKF)" stroke="#0a0a09" stroke-width="1.1" /><path d="M751.1 680.2L775.9 663.0L763.9 652.2L748.7 662.7Z" fill="url(#gKR)" stroke="#0a0a09" stroke-width="1.1" /><path d="M736.1 654.4L748.7 662.7L763.9 652.2L751.3 644.0Z" fill="#8f8b80" stroke="#0a0a09" stroke-width="1.1" /><path d="M483.8 633.5L638.4 744.7L664.7 726.6L652.0 715.8L504.9 612.2L489.0 622.2Z" fill="#60615d" /><path d="M483.8 633.5L638.4 744.7L635.8 726.8L489.0 622.2Z" fill="url(#gKF)" stroke="#0a0a09" stroke-width="1.1" /><path d="M638.4 744.7L664.7 726.6L652.0 715.8L635.8 726.8Z" fill="url(#gKR)" stroke="#0a0a09" stroke-width="1.1" /><path d="M489.0 622.2L635.8 726.8L652.0 715.8L504.9 612.2Z" fill="#8f8b80" stroke="#0a0a09" stroke-width="1.1" /><path d="M596.2 678.3L616.6 692.7L642.4 675.4L629.9 664.7L617.9 656.4L602.1 666.9Z" fill="#60615d" /><path d="M596.2 678.3L616.6 692.7L614.0 675.2L602.1 666.9Z" fill="url(#gKF)" stroke="#0a0a09" stroke-width="1.1" /><path d="M616.6 692.7L642.4 675.4L629.9 664.7L614.0 675.2Z" fill="url(#gKR)" stroke="#0a0a09" stroke-width="1.1" /><path d="M602.1 666.9L614.0 675.2L629.9 664.7L617.9 656.4Z" fill="#8f8b80" stroke="#0a0a09" stroke-width="1.1" /><path d="M796.2 663.5L829.6 685.0L854.6 667.2L842.0 656.6L818.3 641.7L803.2 652.3Z" fill="#60615d" /><path d="M796.2 663.5L829.6 685.0L826.8 667.4L803.2 652.3Z" fill="url(#gKF)" stroke="#0a0a09" stroke-width="1.1" /><path d="M829.6 685.0L854.6 667.2L842.0 656.6L826.8 667.4Z" fill="url(#gKR)" stroke="#0a0a09" stroke-width="1.1" /><path d="M803.2 652.3L826.8 667.4L842.0 656.6L818.3 641.7Z" fill="#8f8b80" stroke="#0a0a09" stroke-width="1.1" /><path d="M694.0 676.1L715.3 690.5L740.4 673.2L728.3 662.4L715.8 654.1L700.3 664.6Z" fill="#60615d" /><path d="M694.0 676.1L715.3 690.5L712.8 672.9L700.3 664.6Z" fill="url(#gKF)" stroke="#0a0a09" stroke-width="1.1" /><path d="M715.3 690.5L740.4 673.2L728.3 662.4L712.8 672.9Z" fill="url(#gKR)" stroke="#0a0a09" stroke-width="1.1" /><path d="M700.3 664.6L712.8 672.9L728.3 662.4L715.8 654.1Z" fill="#8f8b80" stroke="#0a0a09" stroke-width="1.1" /><path d="M652.5 682.4L673.5 696.9L699.0 679.5L686.6 668.7L674.3 660.4L658.7 670.9Z" fill="#60615d" /><path d="M652.5 682.4L673.5 696.9L671.0 679.3L658.7 670.9Z" fill="url(#gKF)" stroke="#0a0a09" stroke-width="1.1" /><path d="M673.5 696.9L699.0 679.5L686.6 668.7L671.0 679.3Z" fill="url(#gKR)" stroke="#0a0a09" stroke-width="1.1" /><path d="M658.7 670.9L671.0 679.3L686.6 668.7L674.3 660.4Z" fill="#8f8b80" stroke="#0a0a09" stroke-width="1.1" /><path d="M751.1 680.2L773.0 694.8L797.8 677.3L785.9 666.5L773.0 658.1L757.8 668.7Z" fill="#60615d" /><path d="M751.1 680.2L773.0 694.8L770.6 677.1L757.8 668.7Z" fill="url(#gKF)" stroke="#0a0a09" stroke-width="1.1" /><path d="M773.0 694.8L797.8 677.3L785.9 666.5L770.6 677.1Z" fill="url(#gKR)" stroke="#0a0a09" stroke-width="1.1" /><path d="M757.8 668.7L770.6 677.1L785.9 666.5L773.0 658.1Z" fill="#8f8b80" stroke="#0a0a09" stroke-width="1.1" /><path d="M616.6 692.7L637.4 707.3L663.2 689.8L650.7 679.0L638.5 670.6L622.6 681.2Z" fill="#60615d" /><path d="M616.6 692.7L637.4 707.3L634.8 689.7L622.6 681.2Z" fill="url(#gKF)" stroke="#0a0a09" stroke-width="1.1" /><path d="M637.4 707.3L663.2 689.8L650.7 679.0L634.8 689.7Z" fill="url(#gKR)" stroke="#0a0a09" stroke-width="1.1" /><path d="M622.6 681.2L634.8 689.7L650.7 679.0L638.5 670.6Z" fill="#8f8b80" stroke="#0a0a09" stroke-width="1.1" /><path d="M715.3 690.5L737.0 705.2L762.2 687.6L750.0 676.7L737.3 668.3L721.8 679.0Z" fill="#60615d" /><path d="M715.3 690.5L737.0 705.2L734.5 687.5L721.8 679.0Z" fill="url(#gKF)" stroke="#0a0a09" stroke-width="1.1" /><path d="M737.0 705.2L762.2 687.6L750.0 676.7L734.5 687.5Z" fill="url(#gKR)" stroke="#0a0a09" stroke-width="1.1" /><path d="M721.8 679.0L734.5 687.5L750.0 676.7L737.3 668.3Z" fill="#8f8b80" stroke="#0a0a09" stroke-width="1.1" /><path d="M673.5 696.9L694.8 711.6L720.4 693.9L708.0 683.1L695.5 674.7L679.8 685.4Z" fill="#60615d" /><path d="M673.5 696.9L694.8 711.6L692.3 693.9L679.8 685.4Z" fill="url(#gKF)" stroke="#0a0a09" stroke-width="1.1" /><path d="M694.8 711.6L720.4 693.9L708.0 683.1L692.3 693.9Z" fill="url(#gKR)" stroke="#0a0a09" stroke-width="1.1" /><path d="M679.8 685.4L692.3 693.9L708.0 683.1L695.5 674.7Z" fill="#8f8b80" stroke="#0a0a09" stroke-width="1.1" /><path d="M829.6 685.0L863.8 707.1L888.8 688.8L876.2 678.3L852.0 662.9L836.7 673.8Z" fill="#60615d" /><path d="M829.6 685.0L863.8 707.1L861.0 689.2L836.7 673.8Z" fill="url(#gKF)" stroke="#0a0a09" stroke-width="1.1" /><path d="M863.8 707.1L888.8 688.8L876.2 678.3L861.0 689.2Z" fill="url(#gKR)" stroke="#0a0a09" stroke-width="1.1" /><path d="M836.7 673.8L861.0 689.2L876.2 678.3L852.0 662.9Z" fill="#8f8b80" stroke="#0a0a09" stroke-width="1.1" /><path d="M773.0 694.8L795.3 709.5L820.2 691.8L808.2 680.9L795.2 672.5L779.9 683.2Z" fill="#60615d" /><path d="M773.0 694.8L795.3 709.5L792.9 691.8L779.9 683.2Z" fill="url(#gKF)" stroke="#0a0a09" stroke-width="1.1" /><path d="M795.3 709.5L820.2 691.8L808.2 680.9L792.9 691.8Z" fill="url(#gKR)" stroke="#0a0a09" stroke-width="1.1" /><path d="M779.9 683.2L792.9 691.8L808.2 680.9L795.2 672.5Z" fill="#8f8b80" stroke="#0a0a09" stroke-width="1.1" /><path d="M637.4 707.3L658.5 722.2L684.4 704.4L671.8 693.6L659.5 685.0L643.5 695.8Z" fill="#60615d" /><path d="M637.4 707.3L658.5 722.2L655.9 704.4L643.5 695.8Z" fill="url(#gKF)" stroke="#0a0a09" stroke-width="1.1" /><path d="M658.5 722.2L684.4 704.4L671.8 693.6L655.9 704.4Z" fill="url(#gKR)" stroke="#0a0a09" stroke-width="1.1" /><path d="M643.5 695.8L655.9 704.4L671.8 693.6L659.5 685.0Z" fill="#8f8b80" stroke="#0a0a09" stroke-width="1.1" /><path d="M737.0 705.2L759.0 720.1L784.3 702.2L772.1 691.4L759.2 682.8L743.7 693.6Z" fill="#60615d" /><path d="M737.0 705.2L759.0 720.1L756.6 702.3L743.7 693.6Z" fill="url(#gKF)" stroke="#0a0a09" stroke-width="1.1" /><path d="M759.0 720.1L784.3 702.2L772.1 691.4L756.6 702.3Z" fill="url(#gKR)" stroke="#0a0a09" stroke-width="1.1" /><path d="M743.7 693.6L756.6 702.3L772.1 691.4L759.2 682.8Z" fill="#8f8b80" stroke="#0a0a09" stroke-width="1.1" /><path d="M694.8 711.6L716.6 726.6L742.1 708.7L729.8 697.8L717.1 689.2L701.3 700.1Z" fill="#60615d" /><path d="M694.8 711.6L716.6 726.6L714.0 708.8L701.3 700.1Z" fill="url(#gKF)" stroke="#0a0a09" stroke-width="1.1" /><path d="M716.6 726.6L742.1 708.7L729.8 697.8L714.0 708.8Z" fill="url(#gKR)" stroke="#0a0a09" stroke-width="1.1" /><path d="M701.3 700.1L714.0 708.8L729.8 697.8L717.1 689.2Z" fill="#8f8b80" stroke="#0a0a09" stroke-width="1.1" /><path d="M795.3 709.5L828.4 731.5L853.3 713.3L841.4 702.4L817.7 687.1L802.3 697.9Z" fill="#60615d" /><path d="M795.3 709.5L828.4 731.5L826.0 713.5L802.3 697.9Z" fill="url(#gKF)" stroke="#0a0a09" stroke-width="1.1" /><path d="M828.4 731.5L853.3 713.3L841.4 702.4L826.0 713.5Z" fill="url(#gKR)" stroke="#0a0a09" stroke-width="1.1" /><path d="M802.3 697.9L826.0 713.5L841.4 702.4L817.7 687.1Z" fill="#8f8b80" stroke="#0a0a09" stroke-width="1.1" /><path d="M658.5 722.2L680.0 737.3L705.9 719.2L693.4 708.4L680.8 699.7L664.8 710.7Z" fill="#60615d" /><path d="M658.5 722.2L680.0 737.3L677.4 719.4L664.8 710.7Z" fill="url(#gKF)" stroke="#0a0a09" stroke-width="1.1" /><path d="M680.0 737.3L705.9 719.2L693.4 708.4L677.4 719.4Z" fill="url(#gKR)" stroke="#0a0a09" stroke-width="1.1" /><path d="M664.8 710.7L677.4 719.4L693.4 708.4L680.8 699.7Z" fill="#8f8b80" stroke="#0a0a09" stroke-width="1.1" /><path d="M872.1 712.5L895.6 727.6L920.2 709.3L908.5 698.4L894.8 689.7L879.6 700.8Z" fill="#60615d" /><path d="M872.1 712.5L895.6 727.6L893.3 709.6L879.6 700.8Z" fill="url(#gKF)" stroke="#0a0a09" stroke-width="1.1" /><path d="M895.6 727.6L920.2 709.3L908.5 698.4L893.3 709.6Z" fill="url(#gKR)" stroke="#0a0a09" stroke-width="1.1" /><path d="M879.6 700.8L893.3 709.6L908.5 698.4L894.8 689.7Z" fill="#8f8b80" stroke="#0a0a09" stroke-width="1.1" /><path d="M716.6 726.6L738.7 741.9L764.3 723.6L751.9 712.8L739.0 704.0L723.2 715.0Z" fill="#60615d" /><path d="M716.6 726.6L738.7 741.9L736.2 723.9L723.2 715.0Z" fill="url(#gKF)" stroke="#0a0a09" stroke-width="1.1" /><path d="M738.7 741.9L764.3 723.6L751.9 712.8L736.2 723.9Z" fill="url(#gKR)" stroke="#0a0a09" stroke-width="1.1" /><path d="M723.2 715.0L736.2 723.9L751.9 712.8L739.0 704.0Z" fill="#8f8b80" stroke="#0a0a09" stroke-width="1.1" /><path d="M680.0 737.3L701.8 752.7L727.8 734.4L715.3 723.5L702.4 714.7L686.4 725.8Z" fill="#60615d" /><path d="M680.0 737.3L701.8 752.7L699.2 734.7L686.4 725.8Z" fill="url(#gKF)" stroke="#0a0a09" stroke-width="1.1" /><path d="M701.8 752.7L727.8 734.4L715.3 723.5L699.2 734.7Z" fill="url(#gKR)" stroke="#0a0a09" stroke-width="1.1" /><path d="M686.4 725.8L699.2 734.7L715.3 723.5L702.4 714.7Z" fill="#8f8b80" stroke="#0a0a09" stroke-width="1.1" /><path d="M743.5 745.2L770.6 763.9L821.6 727.0L810.0 716.0L785.9 700.0L770.5 710.9L776.3 714.8L750.6 733.0Z" fill="#60615d" /><path d="M743.5 745.2L770.6 763.9L768.9 745.6L750.6 733.0Z" fill="url(#gKF)" stroke="#0a0a09" stroke-width="1.1" /><path d="M763.4 723.0L769.1 726.9L776.3 714.8L770.5 710.9Z" fill="url(#gKF)" stroke="#0a0a09" stroke-width="1.1" /><path d="M770.6 763.9L821.6 727.0L810.0 716.0L768.9 745.6Z" fill="url(#gKR)" stroke="#0a0a09" stroke-width="1.1" /><path d="M769.7 754.7 L815.8 721.5" stroke="#0a0a09" stroke-width="0.8"/><path d="M750.6 733.0L768.9 745.6L810.0 716.0L785.9 700.0L770.5 710.9L776.3 714.8Z" fill="#8f8b80" stroke="#0a0a09" stroke-width="1.1" /><path d="M895.6 727.6L919.4 743.0L944.1 724.4L932.4 713.4L918.5 704.6L903.2 715.9Z" fill="#60615d" /><path d="M895.6 727.6L919.4 743.0L917.1 724.8L903.2 715.9Z" fill="url(#gKF)" stroke="#0a0a09" stroke-width="1.1" /><path d="M919.4 743.0L944.1 724.4L932.4 713.4L917.1 724.8Z" fill="url(#gKR)" stroke="#0a0a09" stroke-width="1.1" /><path d="M903.2 715.9L917.1 724.8L932.4 713.4L918.5 704.6Z" fill="#8f8b80" stroke="#0a0a09" stroke-width="1.1" /><path d="M847.1 730.7L870.5 746.1L895.6 727.6L883.7 716.6L870.0 707.8L854.5 719.1Z" fill="#60615d" /><path d="M847.1 730.7L870.5 746.1L868.2 728.0L854.5 719.1Z" fill="url(#gKF)" stroke="#0a0a09" stroke-width="1.1" /><path d="M870.5 746.1L895.6 727.6L883.7 716.6L868.2 728.0Z" fill="url(#gKR)" stroke="#0a0a09" stroke-width="1.1" /><path d="M854.5 719.1L868.2 728.0L883.7 716.6L870.0 707.8Z" fill="#8f8b80" stroke="#0a0a09" stroke-width="1.1" /><path d="M638.4 744.7L660.2 760.5L686.6 742.0L673.8 731.2L660.9 722.1L644.7 733.2Z" fill="#60615d" /><path d="M638.4 744.7L660.2 760.5L657.6 742.4L644.7 733.2Z" fill="url(#gKF)" stroke="#0a0a09" stroke-width="1.1" /><path d="M660.2 760.5L686.6 742.0L673.8 731.2L657.6 742.4Z" fill="url(#gKR)" stroke="#0a0a09" stroke-width="1.1" /><path d="M644.7 733.2L657.6 742.4L673.8 731.2L660.9 722.1Z" fill="#8f8b80" stroke="#0a0a09" stroke-width="1.1" /><path d="M919.4 743.0L943.7 758.6L968.4 739.8L956.7 728.8L942.5 719.8L927.2 731.3Z" fill="#60615d" /><path d="M919.4 743.0L943.7 758.6L941.4 740.3L927.2 731.3Z" fill="url(#gKF)" stroke="#0a0a09" stroke-width="1.1" /><path d="M943.7 758.6L968.4 739.8L956.7 728.8L941.4 740.3Z" fill="url(#gKR)" stroke="#0a0a09" stroke-width="1.1" /><path d="M927.2 731.3L941.4 740.3L956.7 728.8L942.5 719.8Z" fill="#8f8b80" stroke="#0a0a09" stroke-width="1.1" /><path d="M870.5 746.1L894.3 761.8L919.4 743.0L907.5 732.0L893.6 723.0L878.1 734.5Z" fill="#60615d" /><path d="M870.5 746.1L894.3 761.8L892.0 743.5L878.1 734.5Z" fill="url(#gKF)" stroke="#0a0a09" stroke-width="1.1" /><path d="M894.3 761.8L919.4 743.0L907.5 732.0L892.0 743.5Z" fill="url(#gKR)" stroke="#0a0a09" stroke-width="1.1" /><path d="M878.1 734.5L892.0 743.5L907.5 732.0L893.6 723.0Z" fill="#8f8b80" stroke="#0a0a09" stroke-width="1.1" /><path d="M821.7 749.3L845.1 765.0L870.5 746.1L858.4 735.2L844.8 726.2L829.0 737.7Z" fill="#60615d" /><path d="M821.7 749.3L845.1 765.0L842.7 746.7L829.0 737.7Z" fill="url(#gKF)" stroke="#0a0a09" stroke-width="1.1" /><path d="M845.1 765.0L870.5 746.1L858.4 735.2L842.7 746.7Z" fill="url(#gKR)" stroke="#0a0a09" stroke-width="1.1" /><path d="M829.0 737.7L842.7 746.7L858.4 735.2L844.8 726.2Z" fill="#8f8b80" stroke="#0a0a09" stroke-width="1.1" /><path d="M702.8 753.5L751.7 787.9L777.8 768.9L765.2 758.0L725.5 730.6L709.5 741.9Z" fill="#60615d" /><path d="M702.8 753.5L751.7 787.9L749.1 769.6L709.5 741.9Z" fill="url(#gKF)" stroke="#0a0a09" stroke-width="1.1" /><path d="M751.7 787.9L777.8 768.9L765.2 758.0L749.1 769.6Z" fill="url(#gKR)" stroke="#0a0a09" stroke-width="1.1" /><path d="M709.5 741.9L749.1 769.6L765.2 758.0L725.5 730.6Z" fill="#8f8b80" stroke="#0a0a09" stroke-width="1.1" /><path d="M943.7 758.6L968.4 774.5L993.1 755.4L981.5 744.4L967.0 735.3L951.7 746.9Z" fill="#60615d" /><path d="M943.7 758.6L968.4 774.5L966.2 756.1L951.7 746.9Z" fill="url(#gKF)" stroke="#0a0a09" stroke-width="1.1" /><path d="M968.4 774.5L993.1 755.4L981.5 744.4L966.2 756.1Z" fill="url(#gKR)" stroke="#0a0a09" stroke-width="1.1" /><path d="M951.7 746.9L966.2 756.1L981.5 744.4L967.0 735.3Z" fill="#8f8b80" stroke="#0a0a09" stroke-width="1.1" /><path d="M894.3 761.8L918.6 777.7L943.7 758.6L931.8 747.6L917.6 738.5L902.1 750.1Z" fill="#60615d" /><path d="M894.3 761.8L918.6 777.7L916.3 759.3L902.1 750.1Z" fill="url(#gKF)" stroke="#0a0a09" stroke-width="1.1" /><path d="M918.6 777.7L943.7 758.6L931.8 747.6L916.3 759.3Z" fill="url(#gKR)" stroke="#0a0a09" stroke-width="1.1" /><path d="M902.1 750.1L916.3 759.3L931.8 747.6L917.6 738.5Z" fill="#8f8b80" stroke="#0a0a09" stroke-width="1.1" /><path d="M845.1 765.0L868.9 780.9L894.3 761.8L882.2 750.8L868.3 741.7L852.6 753.3Z" fill="#60615d" /><path d="M845.1 765.0L868.9 780.9L866.5 762.6L852.6 753.3Z" fill="url(#gKF)" stroke="#0a0a09" stroke-width="1.1" /><path d="M868.9 780.9L894.3 761.8L882.2 750.8L866.5 762.6Z" fill="url(#gKR)" stroke="#0a0a09" stroke-width="1.1" /><path d="M852.6 753.3L866.5 762.6L882.2 750.8L868.3 741.7Z" fill="#8f8b80" stroke="#0a0a09" stroke-width="1.1" /><path d="M795.9 768.2L819.2 784.1L845.1 765.0L832.8 754.0L819.1 744.9L803.2 756.5Z" fill="#60615d" /><path d="M795.9 768.2L819.2 784.1L816.8 765.8L803.2 756.5Z" fill="url(#gKF)" stroke="#0a0a09" stroke-width="1.1" /><path d="M819.2 784.1L845.1 765.0L832.8 754.0L816.8 765.8Z" fill="url(#gKR)" stroke="#0a0a09" stroke-width="1.1" /><path d="M803.2 756.5L816.8 765.8L832.8 754.0L819.1 744.9Z" fill="#8f8b80" stroke="#0a0a09" stroke-width="1.1" /><path d="M918.6 777.7L943.3 794.0L968.4 774.5L956.5 763.5L942.1 754.2L926.5 766.0Z" fill="#60615d" /><path d="M918.6 777.7L943.3 794.0L941.0 775.4L926.5 766.0Z" fill="url(#gKF)" stroke="#0a0a09" stroke-width="1.1" /><path d="M943.3 794.0L968.4 774.5L956.5 763.5L941.0 775.4Z" fill="url(#gKR)" stroke="#0a0a09" stroke-width="1.1" /><path d="M926.5 766.0L941.0 775.4L956.5 763.5L942.1 754.2Z" fill="#8f8b80" stroke="#0a0a09" stroke-width="1.1" /><path d="M868.9 780.9L893.1 797.2L918.6 777.7L906.5 766.7L892.3 757.4L876.6 769.3Z" fill="#60615d" /><path d="M868.9 780.9L893.1 797.2L890.7 778.7L876.6 769.3Z" fill="url(#gKF)" stroke="#0a0a09" stroke-width="1.1" /><path d="M893.1 797.2L918.6 777.7L906.5 766.7L890.7 778.7Z" fill="url(#gKR)" stroke="#0a0a09" stroke-width="1.1" /><path d="M876.6 769.3L890.7 778.7L906.5 766.7L892.3 757.4Z" fill="#8f8b80" stroke="#0a0a09" stroke-width="1.1" /><path d="M819.2 784.1L843.0 800.4L868.9 780.9L856.6 770.0L842.7 760.6L826.7 772.5Z" fill="#60615d" /><path d="M819.2 784.1L843.0 800.4L840.5 781.9L826.7 772.5Z" fill="url(#gKF)" stroke="#0a0a09" stroke-width="1.1" /><path d="M843.0 800.4L868.9 780.9L856.6 770.0L840.5 781.9Z" fill="url(#gKR)" stroke="#0a0a09" stroke-width="1.1" /><path d="M826.7 772.5L840.5 781.9L856.6 770.0L842.7 760.6Z" fill="#8f8b80" stroke="#0a0a09" stroke-width="1.1" /><path d="M733.4 813.6L756.7 830.4L810.0 790.9L797.9 779.6L784.2 770.1L742.6 800.4Z" fill="#60615d" /><path d="M733.4 813.6L756.7 830.4L756.3 810.2L742.6 800.4Z" fill="url(#gKF)" stroke="#0a0a09" stroke-width="1.1" /><path d="M756.7 830.4L810.0 790.9L797.9 779.6L756.3 810.2Z" fill="url(#gKR)" stroke="#0a0a09" stroke-width="1.1" /><path d="M742.6 800.4L756.3 810.2L797.9 779.6L784.2 770.1Z" fill="#8f8b80" stroke="#0a0a09" stroke-width="1.1" /><path d="M893.1 797.2L917.7 813.7L943.3 794.0L931.2 782.9L916.8 773.5L901.0 785.5Z" fill="#60615d" /><path d="M893.1 797.2L917.7 813.7L915.4 795.1L901.0 785.5Z" fill="url(#gKF)" stroke="#0a0a09" stroke-width="1.1" /><path d="M917.7 813.7L943.3 794.0L931.2 782.9L915.4 795.1Z" fill="url(#gKR)" stroke="#0a0a09" stroke-width="1.1" /><path d="M901.0 785.5L915.4 795.1L931.2 782.9L916.8 773.5Z" fill="#8f8b80" stroke="#0a0a09" stroke-width="1.1" /><path d="M843.0 800.4L867.1 817.0L893.1 797.2L880.8 786.2L866.6 776.7L850.6 788.7Z" fill="#60615d" /><path d="M843.0 800.4L867.1 817.0L864.7 798.3L850.6 788.7Z" fill="url(#gKF)" stroke="#0a0a09" stroke-width="1.1" /><path d="M867.1 817.0L893.1 797.2L880.8 786.2L864.7 798.3Z" fill="url(#gKR)" stroke="#0a0a09" stroke-width="1.1" /><path d="M850.6 788.7L864.7 798.3L880.8 786.2L866.6 776.7Z" fill="#8f8b80" stroke="#0a0a09" stroke-width="1.1" /><path d="M783.6 810.5L807.4 827.3L833.8 807.4L821.2 796.4L807.2 786.8L791.7 798.2Z" fill="#60615d" /><path d="M783.6 810.5L807.4 827.3L805.7 808.0L791.7 798.2Z" fill="url(#gKF)" stroke="#0a0a09" stroke-width="1.1" /><path d="M807.4 827.3L833.8 807.4L821.2 796.4L805.7 808.0Z" fill="url(#gKR)" stroke="#0a0a09" stroke-width="1.1" /><path d="M791.7 798.2L805.7 808.0L821.2 796.4L807.2 786.8Z" fill="#8f8b80" stroke="#0a0a09" stroke-width="1.1" /><path d="M867.1 817.0L891.8 833.8L917.7 813.7L905.4 802.7L891.0 793.1L875.0 805.3Z" fill="#60615d" /><path d="M867.1 817.0L891.8 833.8L889.4 815.0L875.0 805.3Z" fill="url(#gKF)" stroke="#0a0a09" stroke-width="1.1" /><path d="M891.8 833.8L917.7 813.7L905.4 802.7L889.4 815.0Z" fill="url(#gKR)" stroke="#0a0a09" stroke-width="1.1" /><path d="M875.0 805.3L889.4 815.0L905.4 802.7L891.0 793.1Z" fill="#8f8b80" stroke="#0a0a09" stroke-width="1.1" /><path d="M756.7 830.4L780.5 847.5L807.4 827.3L795.1 815.9L781.1 806.1L765.9 817.3Z" fill="#60615d" /><path d="M756.7 830.4L780.5 847.5L779.8 827.3L765.9 817.3Z" fill="url(#gKF)" stroke="#0a0a09" stroke-width="1.1" /><path d="M780.5 847.5L807.4 827.3L795.1 815.9L779.8 827.3Z" fill="url(#gKR)" stroke="#0a0a09" stroke-width="1.1" /><path d="M765.9 817.3L779.8 827.3L795.1 815.9L781.1 806.1Z" fill="#8f8b80" stroke="#0a0a09" stroke-width="1.1" /><path d="M780.5 847.5L804.7 864.9L858.1 824.2L846.2 812.7L831.9 802.9L789.5 834.7Z" fill="#60615d" /><path d="M780.5 847.5L804.7 864.9L803.7 844.8L789.5 834.7Z" fill="url(#gKF)" stroke="#0a0a09" stroke-width="1.1" /><path d="M804.7 864.9L858.1 824.2L846.2 812.7L803.7 844.8Z" fill="url(#gKR)" stroke="#0a0a09" stroke-width="1.1" /><path d="M789.5 834.7L803.7 844.8L846.2 812.7L831.9 802.9Z" fill="#8f8b80" stroke="#0a0a09" stroke-width="1.1" /><g filter="url(#blur5)" opacity="0.4"><path d="M1850 236 L1892 214 L1908 226 L1868 252Z" fill="#8a8a8a"/></g><path d="M1856.2 167.9L1891.7 183.9L1855.9 202.5L1822.1 182.8Z" fill="#efefef" stroke="#9a9a9a" stroke-width="0.8" /><path d="M1822.1 182.8L1855.9 202.5L1856.6 243.1L1824.8 221.6Z" fill="#e8e8e8" stroke="#9a9a9a" stroke-width="0.8" /><path d="M1855.9 202.5L1891.7 183.9L1888.4 220.8L1856.6 243.1Z" fill="#dcdcdc" stroke="#9a9a9a" stroke-width="0.8" /><path d="M1855.9 202.5L1891.7 183.9L1888.4 220.8L1856.6 243.1Z" fill="url(#gVc)" stroke="#9a9a9a" stroke-width="0.8" /><path d="M1820.8 176 L1824.8 221.8" stroke="#5c5cf2" stroke-width="1.6"/><path d="M1824.8 222.2 L1862 248.6" stroke="#f28080" stroke-width="1.4"/><text x="1812.5" y="174.5" font-family="Liberation Sans, sans-serif" font-size="14" fill="#5c5cf2">Z</text><text x="1862.5" y="259" font-family="Liberation Sans, sans-serif" font-size="14" fill="#f27a7a">X</text></g>
</svg>

<svg width="1928" height="1048" viewBox="0 0 1928 1048">
<g><path d="M4.5 4.5 L14 3 L17 4.2 L17 17.5 L14.5 19 L4.5 19 Z" fill="#e8731c"/><path d="M4 15 H16 V19 H4 Z" fill="#a3400c"/><path d="M4 4.5 H15.5 V15 H4 Z" fill="#ff8a24"/><path d="M15.5 4.5 L17 4 V17.5 L15.5 19Z" fill="#c4560f"/><path d="M7.6 7 H12.4 V8.6 H9.4 V10 H12 V11.5 H9.4 V13.6 H7.6 Z" fill="#fff"/><rect x="7" y="16.2" width="6" height="1.5" fill="#e9b48f"/></g>
<g stroke="#000" stroke-width="1" fill="none"><path d="M1799 10.5 H1810"/><rect x="1845.5" y="7.5" width="7" height="7"/><path d="M1847.5 7.5 V5.5 H1854.5 V12.5 H1852.5"/><path d="M1889.5 5 L1900.5 16 M1900.5 5 L1889.5 16"/></g>
<g fill="#686868"><rect x="9.2" y="32.2" width="3.6" height="3.6"/><rect x="14.3" y="32.2" width="3.6" height="3.6"/><rect x="19.4" y="32.2" width="3.6" height="3.6"/><rect x="9.2" y="37.3" width="3.6" height="3.6"/><rect x="14.3" y="37.3" width="3.6" height="3.6"/><rect x="19.4" y="37.3" width="3.6" height="3.6"/><rect x="9.2" y="42.4" width="3.6" height="3.6"/><rect x="14.3" y="42.4" width="3.6" height="3.6"/><rect x="19.4" y="42.4" width="3.6" height="3.6"/></g>
<path d="M42 31.5 H50 L55 36.5 V46.5 H42 Z M50 31.5 V36.5 H55" fill="#686868"/><path d="M50.3 31.2 V36.3 H55.3" fill="none" stroke="#ccc" stroke-width="1"/>
<path d="M61 36.3 h7 l-3.5 4.5 z" fill="#686868"/>
<path d="M87.5 33 H98 L101 36 V46 H87.5 Z" fill="#686868"/><rect x="90.5" y="33" width="7" height="4.6" fill="#ccc"/><rect x="94.6" y="33.5" width="1.8" height="3.4" fill="#686868"/><rect x="90" y="41" width="8.5" height="5" fill="#ccc"/><rect x="91.5" y="42.5" width="5.5" height="3.5" fill="#686868"/>
<path d="M125 34 L121 38.5 L125.5 42.5 M121.5 38.5 H128 Q132.5 38.5 132.5 44.5" fill="none" stroke="#686868" stroke-width="1.8"/>
<path d="M140 36.3 h7 l-3.5 4.5 z" fill="#686868"/>
<path d="M168 34 L172 38.5 L167.5 42.5 M171.5 38.5 H165 Q160.5 38.5 160.5 44.5" fill="none" stroke="#999" stroke-width="1.8"/>
<path d="M179 36.3 h7 l-3.5 4.5 z" fill="#999"/>
<g transform="translate(509,33)"><path d="M7 0 L14 4 L7 8 L0 4Z" fill="#ffb074"/><path d="M0 4 L7 8 V16 L0 12Z" fill="#ff8a34"/><path d="M14 4 L7 8 V16 L14 12Z" fill="#f26a0a"/></g>
<g transform="translate(1238,33)"><path d="M7 0 L14 4 L7 8 L0 4Z" fill="#ffb074"/><path d="M0 4 L7 8 V16 L0 12Z" fill="#ff8a34"/><path d="M14 4 L7 8 V16 L14 12Z" fill="#f26a0a"/></g>
<path d="M914 37 l8 8 m0 -8 l-8 8" stroke="#666" stroke-width="1.3" fill="none"/>
<path d="M1654 37 l7 7 m0 -7 l-7 7" stroke="#777" stroke-width="1.2" fill="none"/>
<path d="M1681 40 h12 M1687 34 v12" stroke="#6a6a6a" stroke-width="2.2" fill="none"/>
<path d="M1713 31 H1721 L1725 35 V37 L1718 46 H1713 Z" fill="#686868"/><path d="M1727 36 l2.3 2.3 l-7 7.4 l-3.3 1 l1 -3.3 z" fill="#686868"/>
<circle cx="1785.8" cy="39" r="7.6" fill="none" stroke="#686868" stroke-width="1.2"/><circle cx="1785.8" cy="39" r="5.8" fill="#686868"/><path d="M1785.8 35 V39.5 H1789.5" stroke="#ccc" stroke-width="1.2" fill="none"/>
<path d="M1813 43 q2 -2 2 -6 q0 -5 4 -5.5 q4 0.5 4 5.5 q0 4 2 6 z" fill="#686868"/><path d="M1817.5 44.5 h3 l-1.5 1.8 z" fill="#686868"/><circle cx="1823.5" cy="34.5" r="2.6" fill="#1a9fe3"/>
<circle cx="1852" cy="39.3" r="8" fill="#686868"/><text x="1852" y="44" text-anchor="middle" font-family="Liberation Sans, sans-serif" font-weight="bold" font-size="13" fill="#ccc">?</text>
<defs><linearGradient id="av2" x1="0" y1="0" x2="0" y2="1"><stop offset="0" stop-color="#b9c7d9"/><stop offset="1" stop-color="#8fa4c0"/></linearGradient><clipPath id="avc2"><circle cx="1893" cy="39.3" r="11.6"/></clipPath></defs><circle cx="1893" cy="39.3" r="11.6" fill="url(#av2)"/><g clip-path="url(#avc2)" fill="#4f5d75"><ellipse cx="1894" cy="36" rx="5.2" ry="6.6"/><path d="M1883 52 q1 -8 8 -9 h6 q7 1 8 9 z"/></g>
<text x="136.6" y="16" font-size="12.4" fill="#000" font-family='"Liberation Sans","Noto Sans CJK JP",sans-serif' textLength="37.2" lengthAdjust="spacingAndGlyphs">個人用</text>
<text x="184.8" y="16" font-size="12.1" fill="#000" font-family='"Liberation Sans","Noto Sans CJK JP",sans-serif' textLength="72.6" lengthAdjust="spacingAndGlyphs">商用利用不可</text>
<rect x="12.5" y="65.5" width="108" height="60" rx="4" fill="#f3f3f3" stroke="#d9d9d9"/>
<g fill="#1a1a1a" font-family='"Liberation Sans","Noto Sans CJK JP",sans-serif'><text x="41.5" y="100.5" font-size="11" font-weight="bold" textLength="38.5" lengthAdjust="spacingAndGlyphs">デザイン</text></g>
<path d="M85 93.5 h6.5 l-3.25 4.2 z" fill="#222"/>
<g fill="#0e8fd6" font-family='"Liberation Sans","Noto Sans CJK JP",sans-serif'><text x="149.5" y="70" font-size="10.5" font-weight="bold" textLength="32.5" lengthAdjust="spacingAndGlyphs">ソリッド</text></g>
<rect x="138.5" y="76" width="56" height="3.2" rx="1.2" fill="#0e8fd6"/>
<g fill="#222" font-family='"Liberation Sans","Noto Sans CJK JP",sans-serif'><text x="227.5" y="70" font-size="10.5" textLength="40" lengthAdjust="spacingAndGlyphs">サーフェス</text></g>
<g fill="#222" font-family='"Liberation Sans","Noto Sans CJK JP",sans-serif'><text x="314.5" y="70" font-size="10.5" textLength="30.5" lengthAdjust="spacingAndGlyphs">メッシュ</text></g>
<g fill="#222" font-family='"Liberation Sans","Noto Sans CJK JP",sans-serif'><text x="388" y="70" font-size="10.5" textLength="32.3" lengthAdjust="spacingAndGlyphs">フォーム</text></g>
<g fill="#222" font-family='"Liberation Sans","Noto Sans CJK JP",sans-serif'><text x="466.5" y="70" font-size="10.5" textLength="25" lengthAdjust="spacingAndGlyphs">シート</text></g>
<g fill="#222" font-family='"Liberation Sans","Noto Sans CJK JP",sans-serif'><text x="494" y="70" font-size="10.5" textLength="25.5" lengthAdjust="spacingAndGlyphs">メタル</text></g>
<g fill="#222" font-family='"Liberation Sans","Noto Sans CJK JP",sans-serif'><text x="564.5" y="70" font-size="10.5" textLength="45" lengthAdjust="spacingAndGlyphs">プラスチック</text></g>
<g fill="#222" font-family='"Liberation Sans","Noto Sans CJK JP",sans-serif'><text x="657.5" y="70" font-size="10.5" textLength="52" lengthAdjust="spacingAndGlyphs">ユーティリティ</text></g>
<g fill="#222" font-family='"Liberation Sans","Noto Sans CJK JP",sans-serif'><text x="219.5" y="130.6" font-size="10.5">作成</text></g>
<path d="M244.7 124.6 h5.6 l-2.8 3.4 z" fill="#333"/>
<g fill="#222" font-family='"Liberation Sans","Noto Sans CJK JP",sans-serif'><text x="467.5" y="130.6" font-size="10.5">修正</text></g>
<path d="M492.3 124.6 h5.6 l-2.8 3.4 z" fill="#333"/>
<g fill="#222" font-family='"Liberation Sans","Noto Sans CJK JP",sans-serif'><text x="642.5" y="130.6" font-size="10.5" textLength="39" lengthAdjust="spacingAndGlyphs">アセンブリ</text></g>
<path d="M685.6 124.6 h5.6 l-2.8 3.4 z" fill="#333"/>
<g fill="#222" font-family='"Liberation Sans","Noto Sans CJK JP",sans-serif'><text x="730.5" y="130.6" font-size="10.5">構築</text></g>
<path d="M755.6 124.6 h5.6 l-2.8 3.4 z" fill="#333"/>
<g fill="#222" font-family='"Liberation Sans","Noto Sans CJK JP",sans-serif'><text x="789.5" y="130.6" font-size="10.5">検査</text></g>
<path d="M814.6 124.6 h5.6 l-2.8 3.4 z" fill="#333"/>
<g fill="#222" font-family='"Liberation Sans","Noto Sans CJK JP",sans-serif'><text x="848.5" y="130.6" font-size="10.5">挿入</text></g>
<path d="M873.4 124.6 h5.6 l-2.8 3.4 z" fill="#333"/>
<g fill="#222" font-family='"Liberation Sans","Noto Sans CJK JP",sans-serif'><text x="907" y="130.6" font-size="10.5">選択</text></g>
<path d="M932.2 124.6 h5.6 l-2.8 3.4 z" fill="#333"/>
<rect x="349.7" y="81" width="1.6" height="52" fill="#dcdcdc"/>
<rect x="618.7" y="81" width="1.6" height="52" fill="#dcdcdc"/>
<rect x="716.2" y="81" width="1.6" height="52" fill="#dcdcdc"/>
<rect x="774.7" y="81" width="1.6" height="52" fill="#dcdcdc"/>
<rect x="834.2" y="81" width="1.6" height="52" fill="#dcdcdc"/>
<rect x="892.7" y="81" width="1.6" height="52" fill="#dcdcdc"/>
<g fill="none" stroke="#5a5a5a" stroke-width="1.1"><path d="M138.7 83.7 H166.2 V100 M138.7 83.7 V111.2 H153" stroke-dasharray="9 2.5"/><path d="M146 91 H159.5 M146 91 V104 M159.5 91 Q158.5 103 146 104"/></g><rect x="137.2" y="82.2" width="3" height="3" fill="#555"/><rect x="164.6" y="82.2" width="3" height="3" fill="#555"/><rect x="137.2" y="109.6" width="3" height="3" fill="#555"/><rect x="144.4" y="89.4" width="3" height="3" fill="#555"/><rect x="158" y="89.4" width="3" height="3" fill="#555"/><rect x="144.4" y="102.5" width="3" height="3" fill="#555"/><path d="M160.3 100.3 h3.6 v5 h5 v3.6 h-5 v5 h-3.6 v-5 h-5 v-3.6 h5 z" fill="#22a245"/>
<path d="M181.20 88.10 L199.40 88.10 L199.40 108.80 L181.20 108.80Z" fill="#6bb1e4" /><path d="M181.20 88.10 L186.50 82.00 L204.80 82.00 L199.40 88.10Z" fill="#8fcbf6" /><path d="M199.40 88.10 L204.80 82.00 L204.80 103.00 L199.40 108.80Z" fill="#4792cf" /><path d="M181.20 108.80 L199.40 108.80 L199.40 113.50 L181.20 113.50Z" fill="#c6c6c6" /><path d="M199.40 108.80 L204.80 103.00 L204.80 107.70 L199.40 113.50Z" fill="#a8a8a8" /><path d="M208.5 107.5 V86" stroke="#333" stroke-width="1.2"/><path d="M205.8 88.5 L208.5 83.5 L211.2 88.5Z" fill="#333"/>
<path d="M223.1 97.5 Q237 85 254 96 L248.8 100.6 Q237.5 95 228.8 102.5 Z" fill="#8fcbf6"/><path d="M223.1 97.5 L228.8 102.5 Q237.5 96.5 248.8 100.6 L248.8 110 Q237.5 103 228.8 110.6 L223.1 105 Z" fill="#6bb1e4"/><path d="M223.1 97.5 L228.8 102.5 V110.6 L223.1 105Z" fill="#4792cf"/><path d="M248.80 100.80 L254.60 96.40 L254.60 105.00 L248.80 110.00Z" fill="#fff" stroke="#666" stroke-width="1" stroke-linejoin="round" /><path d="M253 88.8 Q238 80 225.5 88.2" fill="none" stroke="#333" stroke-width="1.1"/><path d="M223.3 89.8 L226.2 85.6 L228.4 89.4Z" fill="#333"/>
<path d="M266.30 88.10 L292.30 88.10 L292.30 113.50 L266.30 113.50Z" fill="#dadada" stroke="#707070" stroke-width="1" stroke-linejoin="round" /><path d="M266.30 88.10 L271.90 82.30 L297.90 82.30 L292.30 88.10Z" fill="#efefef" stroke="#707070" stroke-width="1" stroke-linejoin="round" /><path d="M292.30 88.10 L297.90 82.30 L297.90 108.10 L292.30 113.50Z" fill="#b4b4b4" stroke="#707070" stroke-width="1" stroke-linejoin="round" /><circle cx="279.4" cy="100.7" r="8" fill="#eee" stroke="#666" stroke-width="1"/><circle cx="279.4" cy="100.7" r="6.3" fill="#6bb1e4"/><path d="M276.3 95.3 A6.3 6.3 0 0 1 285.6 100.5 A5.2 5.2 0 0 1 276.3 95.3Z" fill="#f4f4f4"/>
<path d="M315.9 87.6 H330 M312.5 90.9 V105.2 M315.9 108.6 H330" stroke="#666" stroke-width="1.1" fill="none"/><rect x="309.3" y="84.5" width="6.5" height="6.5" fill="#fff" stroke="#666" stroke-width="1"/><rect x="330" y="84.3" width="6.9" height="6.8" fill="#6bb1e4"/><rect x="309" y="105.2" width="6.9" height="6.8" fill="#6bb1e4"/><rect x="330" y="105.2" width="6.9" height="6.8" fill="#6bb1e4"/>
<path d="M364.40 88.10 L370.60 88.10 L370.60 113.50 L364.40 113.50Z" fill="#dadada" stroke="#707070" stroke-width="1" stroke-linejoin="round" /><path d="M364.40 88.10 L370.00 82.30 L375.60 82.30 L370.60 88.10Z" fill="#efefef" stroke="#707070" stroke-width="1" stroke-linejoin="round" /><path d="M370.60 88.10 L380.60 88.10 L380.60 113.50 L370.60 113.50Z" fill="#6bb1e4" /><path d="M370.60 88.10 L375.60 82.30 L385.60 82.30 L380.60 88.10Z" fill="#8fcbf6" /><path d="M380.60 88.10 L385.60 82.30 L385.60 108.10 L380.60 113.50Z" fill="#4792cf" /><path d="M383.8 97.5 H390" stroke="#fff" stroke-width="3"/><path d="M383.8 97.5 H390" stroke="#333" stroke-width="1.2"/><path d="M388.5 94.8 L393 97.5 L388.5 100.2Z" fill="#333" stroke="#fff" stroke-width="0.5"/>
<path d="M406.3 113.5 V91.3 L413 82.3 H423 L418 88.6 Q428 91 430.6 101 V113.5Z" fill="#dadada" stroke="#707070"/><path d="M406.3 91.3 L413 82.3 H424 L418 90 Z" fill="#efefef" stroke="#707070"/><path d="M430.6 101 L437.6 95.5 V107 L430.6 113.5Z" fill="#b4b4b4" stroke="#707070"/><path d="M418 88.6 L426 82.2 Q436 84.5 437.8 95.2 L430.6 101.2 Q428.5 91 418 88.6Z" fill="#6bb1e4"/>
<path d="M449.00 88.10 L473.10 88.10 L473.10 113.50 L449.00 113.50Z" fill="#dadada" stroke="#707070" stroke-width="1" stroke-linejoin="round" /><path d="M449.00 88.10 L456.30 82.30 L480.60 82.30 L473.10 88.10Z" fill="#efefef" stroke="#707070" stroke-width="1" stroke-linejoin="round" /><path d="M473.10 88.10 L480.60 82.30 L480.60 106.30 L473.10 113.50Z" fill="#b4b4b4" stroke="#707070" stroke-width="1" stroke-linejoin="round" /><rect x="453.1" y="93.8" width="16.3" height="16.2" fill="#f6f6f6"/><path d="M453.10 93.80 L460.60 93.80 L460.60 102.50 L453.10 110.00Z" fill="#4792cf" /><path d="M460.60 102.50 L469.40 102.50 L469.40 110.00 L453.10 110.00Z" fill="#8fcbf6" />
<path d="M502.00 91.00 L520.00 91.00 L520.00 104.00 L511.00 104.00 L511.00 113.50 L492.30 113.50 L492.30 96.50 L502.00 96.50Z" fill="#6bb1e4" /><path d="M502.00 91.00 L506.50 82.30 L524.00 82.30 L520.00 91.00Z" fill="#8fcbf6" /><path d="M492.30 96.50 L496.00 92.50 L502.00 92.50 L502.00 96.50Z" fill="#8fcbf6" /><path d="M520.00 91.00 L524.00 82.30 L524.00 98.60 L520.00 104.00Z" fill="#4792cf" /><path d="M511.00 104.00 L520.00 104.00 L524.00 98.60 L516.00 98.60 L516.00 108.00 L511.00 113.50Z" fill="#4792cf" />
<path d="M537.30 88.10 L560.00 88.10 L560.00 97.50 L537.30 97.50Z" fill="#6bb1e4" /><path d="M537.30 88.10 L542.50 82.30 L565.00 82.30 L560.00 88.10Z" fill="#8fcbf6" /><path d="M560.00 88.10 L565.00 82.30 L565.00 92.50 L560.00 97.50Z" fill="#4792cf" /><path d="M537.30 103.10 L560.00 103.10 L560.00 112.50 L537.30 112.50Z" fill="#dadada" stroke="#707070" stroke-width="1" stroke-linejoin="round" /><path d="M560.00 103.10 L565.00 98.10 L565.00 108.10 L560.00 112.50Z" fill="#b4b4b4" stroke="#707070" stroke-width="1" stroke-linejoin="round" /><path d="M535 100.4 H560 L566.9 92.5" stroke="#fff" stroke-width="3.4" fill="none"/><path d="M535 100.4 H560 L566.9 92.5" stroke="#2d96e8" stroke-width="1.4" fill="none"/>
<path d="M594 86 V110 M582 98 H606" stroke="#333" stroke-width="2.3"/><path d="M594 82.5 l4.6 7 h-9.2z M594 113.5 l4.6 -7 h-9.2z M578.5 98 l7 -4.6 v9.2z M609.5 98 l-7 -4.6 v9.2z" fill="#333"/>
<path d="M632.10 101.30 L644.40 101.30 L644.40 113.50 L632.10 113.50Z" fill="#dadada" stroke="#707070" stroke-width="1" stroke-linejoin="round" /><path d="M644.40 103.10 L656.30 103.10 L656.30 113.50 L644.40 113.50Z" fill="#dadada" stroke="#707070" stroke-width="1" stroke-linejoin="round" /><path d="M644.40 103.10 L648.10 98.10 L660.00 98.10 L656.30 103.10Z" fill="#efefef" stroke="#707070" stroke-width="1" stroke-linejoin="round" /><path d="M656.30 103.10 L660.00 98.10 L660.00 109.40 L656.30 113.50Z" fill="#b4b4b4" stroke="#707070" stroke-width="1" stroke-linejoin="round" /><path d="M632.10 90.60 L643.80 90.60 L643.80 101.30 L632.10 101.30Z" fill="#6bb1e4" /><path d="M632.10 90.60 L635.60 86.30 L647.50 86.30 L643.80 90.60Z" fill="#8fcbf6" /><path d="M643.80 90.60 L647.50 86.30 L647.50 97.50 L643.80 101.30Z" fill="#4792cf" /><path d="M655.60 83.00 L656.90 87.46 L660.97 85.23 L658.74 89.30 L663.20 90.60 L658.74 91.90 L660.97 95.97 L656.90 93.74 L655.60 98.20 L654.30 93.74 L650.23 95.97 L652.46 91.90 L648.00 90.60 L652.46 89.30 L650.23 85.23 L654.30 87.46Z" fill="#f7a400" />
<path d="M677.5 91.5 L683.5 85 Q686 83.5 688.5 85.5 V95.5 L685 96.5 V105.5 L678.5 110.5 Q677 110 677.3 108 Z" fill="#d2d2d2" stroke="#808080"/><path d="M683.5 86 Q686 88 688.5 86 M683.5 86 V96" fill="none" stroke="#909090" stroke-width="0.8"/><path d="M697.5 87.5 Q698 86 699.5 86.5 L704.5 92 V109.5 Q704 111.5 702.5 110.5 L697.5 105.5 Z" fill="#d6d6d6" stroke="#808080"/><path d="M692.5 97 Q695 95 697.5 97 V104 Q695 106 692.5 104Z" fill="#c4c4c4" stroke="#808080"/><path d="M686.4 97 V102 M695.4 90 V95.5" stroke="#2d96e8" stroke-width="1.2"/>
<path d="M732.10 90.60 L740.60 90.60 L740.60 112.50 L732.10 112.50Z" fill="#dadada" stroke="#707070" stroke-width="1" stroke-linejoin="round" /><path d="M732.10 90.60 L740.60 82.50 L749.00 82.50 L740.60 90.60Z" fill="#efefef" stroke="#707070" stroke-width="1" stroke-linejoin="round" /><path d="M740.60 90.60 L750.00 82.80 L750.00 105.00 L740.60 112.50Z" fill="#5bc07f" /><path d="M753.10 91.30 L761.90 83.10 L761.90 104.40 L753.10 112.50Z" fill="#e49b6b" />
<rect x="792.2" y="100" width="27.8" height="6" fill="#f7a400"/><rect x="795" y="100" width="0.9" height="1.8" fill="#b87400"/><rect x="797.9" y="100" width="0.9" height="2.6" fill="#b87400"/><rect x="800.8" y="100" width="0.9" height="1.8" fill="#b87400"/><rect x="803.7" y="100" width="0.9" height="2.6" fill="#b87400"/><rect x="806.6" y="100" width="0.9" height="1.8" fill="#b87400"/><rect x="809.5" y="100" width="0.9" height="2.6" fill="#b87400"/><rect x="812.4" y="100" width="0.9" height="1.8" fill="#b87400"/><rect x="815.3" y="100" width="0.9" height="2.6" fill="#b87400"/><rect x="818.2" y="100" width="0.9" height="1.8" fill="#b87400"/><path d="M792.4 90 V98.8 M819.8 90 V98.8 M794 94.6 H818" stroke="#666" stroke-width="1.1" fill="none"/><path d="M793.3 94.6 l3.4 -2.2 v4.4z M818.9 94.6 l-3.4 -2.2 v4.4z" fill="#666"/>
<rect x="850.3" y="83.4" width="28.5" height="28.3" fill="#8fcbf9" stroke="#5a9fd6" stroke-width="0.8"/><path d="M850.5 101.5 Q856 92.5 860.5 95.5 Q863 97 867 105 Q870.5 99 873.5 101.5 L878.6 107 V111.6 H850.5Z" fill="#3f8fca"/><circle cx="871" cy="91.2" r="3.1" fill="#ffffd0"/>
<rect x="905" y="79" width="38" height="38" fill="#0696d7"/><rect x="908.4" y="82.6" width="27" height="21" fill="none" stroke="#8ee68a" stroke-width="1.1" stroke-dasharray="3.6 2.2"/><path d="M929.00 96.30 L929.00 110.00 L932.10 107.30 L934.80 113.50 L937.30 112.30 L934.80 106.50 L939.40 106.30Z" fill="#fff" />
<rect x="4.5" y="144.5" width="299" height="24" fill="#f2f2f2" stroke="#c9c9c9"/>
<path d="M9 157 l4.6 -3 v6z M14 157 l4.6 -3 v6z" fill="#222"/>
<g fill="#333" font-family='"Liberation Sans","Noto Sans CJK JP",sans-serif'><text x="28.5" y="160" font-size="10.5" textLength="31.8" lengthAdjust="spacingAndGlyphs">ブラウザ</text></g>
<circle cx="287.3" cy="156.5" r="4.2" fill="#222"/><rect x="284.6" y="155.8" width="5.4" height="1.4" fill="#f2f2f2"/>
<path d="M299.5 151 v11 M301.5 151.5 v10" stroke="#888" stroke-width="1"/>
<rect x="8" y="174" width="6" height="814" fill="#c9cacc"/><rect x="8" y="184" width="6" height="47" rx="3" fill="#a2a2a4"/>
<rect x="4.5" y="1011.5" width="299" height="24" fill="#f2f2f2" stroke="#c9c9c9"/>
<g fill="#333" font-family='"Liberation Sans","Noto Sans CJK JP",sans-serif'><text x="28" y="1026.5" font-size="10.5" textLength="32" lengthAdjust="spacingAndGlyphs">コメント</text></g>
<circle cx="287.3" cy="1023.3" r="4.2" fill="#222"/><path d="M284.8 1023.3 h5 M287.3 1020.8 v5" stroke="#f2f2f2" stroke-width="1.3"/>
<path d="M299.5 1017 v12 M301.5 1018 v10" stroke="#888" stroke-width="1"/>
<defs><linearGradient id="tg" x1="0.2" y1="0.2" x2="1" y2="1"><stop offset="0" stop-color="#e0e0e0"/><stop offset="1" stop-color="#505050"/></linearGradient><linearGradient id="bd" x1="0" y1="0" x2="1" y2="0"><stop offset="0" stop-color="#f1f2f4"/><stop offset="0.6" stop-color="#bfc3cc"/><stop offset="1" stop-color="#d9dbe1"/></linearGradient></defs>
<rect x="58" y="174" width="90" height="20" fill="#f1f1f1"/>
<path d="M61 177.6 h6.2 l1.8 1.6 h8 v11.2 h-16 z" fill="#9a9a9a"/><path d="M61 180.4 h16" stroke="#b8b8b8" stroke-width="0.8"/><path d="M40.5 178 L49 184 L40.5 190Z" fill="#f6f6f6" stroke="#3a3a3a" stroke-width="1.2" stroke-linejoin="round"/>
<g fill="#222" font-family='"Liberation Sans","Noto Sans CJK JP",sans-serif'><text x="89.7" y="187.9" font-size="10.5" textLength="25.3" lengthAdjust="spacingAndGlyphs">ビュー</text><text x="115" y="187.9" font-size="10.5">管理</text></g>
<rect x="58" y="198" width="90.8" height="20" fill="#f1f1f1"/>
<g fill="none" stroke="#b4b4b4" stroke-width="1"><path d="M61.3 208 Q69.05 199.5 76.8 208 Q69.05 216.5 61.3 208Z"/><circle cx="69.05" cy="208" r="2.6"/><path d="M64.3 202.5 L73.8 213.5"/></g><path d="M86 201.6 h6.2 l1.8 1.6 h8 v11.2 h-16 z" fill="#9a9a9a"/><path d="M86 204.4 h16" stroke="#b8b8b8" stroke-width="0.8"/><path d="M40.5 202 L49 208 L40.5 214Z" fill="#f6f6f6" stroke="#3a3a3a" stroke-width="1.2" stroke-linejoin="round"/>
<g fill="#222" font-family='"Liberation Sans","Noto Sans CJK JP",sans-serif'><text x="115.1" y="211.9" font-size="10.5">原点</text></g>
<rect x="58" y="222" width="90.8" height="20" fill="#f1f1f1"/>
<path d="M61.3 232 Q69.05 223 76.8 232 Q69.05 241 61.3 232Z" fill="#9c9c9c"/><circle cx="69.05" cy="232" r="3.2" fill="#f1f1f1"/><circle cx="69.05" cy="232" r="1.7" fill="#9c9c9c"/><path d="M86 225.6 h6.2 l1.8 1.6 h8 v11.2 h-16 z" fill="#9a9a9a"/><path d="M86 228.4 h16" stroke="#b8b8b8" stroke-width="0.8"/><path d="M49 226.5 L49 237.5 L38.5 237.5Z" fill="url(#tg)" stroke="#2c2c2c" stroke-width="1.1" stroke-linejoin="round"/>
<g fill="#222" font-family='"Liberation Sans","Noto Sans CJK JP",sans-serif'><text x="115.1" y="235.9" font-size="10.5" textLength="24.6" lengthAdjust="spacingAndGlyphs">ボディ</text></g>
<rect x="76" y="246" width="162.8" height="20" fill="#f1f1f1"/>
<path d="M79.3 256 Q87.05 247 94.8 256 Q87.05 265 79.3 256Z" fill="#9c9c9c"/><circle cx="87.05" cy="256" r="3.2" fill="#f1f1f1"/><circle cx="87.05" cy="256" r="1.7" fill="#9c9c9c"/><path d="M104 249.6 h6.2 l1.8 1.6 h8 v11.2 h-16 z" fill="#9a9a9a"/><path d="M104 252.4 h16" stroke="#b8b8b8" stroke-width="0.8"/><path d="M67 250.5 L67 261.5 L56.5 261.5Z" fill="url(#tg)" stroke="#2c2c2c" stroke-width="1.1" stroke-linejoin="round"/>
<g fill="#222" font-family='"Liberation Sans","Noto Sans CJK JP",sans-serif'><text x="133.1" y="259.9" font-size="10.5" textLength="81.5" lengthAdjust="spacingAndGlyphs">キーボードグループ</text><text x="217.40" y="259.90" font-size="10.80" textLength="12.50" lengthAdjust="spacingAndGlyphs" >(8)</text></g>
<rect x="94" y="270" width="110.8" height="20" fill="#f1f1f1"/>
<path d="M97.3 280 Q105.05 271 112.8 280 Q105.05 289 97.3 280Z" fill="#9c9c9c"/><circle cx="105.05" cy="280" r="3.2" fill="#f1f1f1"/><circle cx="105.05" cy="280" r="1.7" fill="#9c9c9c"/><rect x="122.5" y="272.3" width="15" height="15.4" rx="4.2" fill="#fdfdfd" stroke="#465062" stroke-width="1.15"/><path d="M125.9 278.6 h9.6 v4.6 q0 2.9 -2.9 2.9 h-3.8 q-2.9 0 -2.9 -2.9z" fill="url(#bd)"/>
<g fill="#222" font-family='"Liberation Sans","Noto Sans CJK JP",sans-serif'><text x="151.1" y="283.9" font-size="10.5" textLength="45.3" lengthAdjust="spacingAndGlyphs">キーボード</text></g>
<rect x="94" y="294" width="138.8" height="20" fill="#f1f1f1"/>
<path d="M97.3 304 Q105.05 295 112.8 304 Q105.05 313 97.3 304Z" fill="#9c9c9c"/><circle cx="105.05" cy="304" r="3.2" fill="#f1f1f1"/><circle cx="105.05" cy="304" r="1.7" fill="#9c9c9c"/><rect x="122.5" y="296.3" width="15" height="15.4" rx="4.2" fill="#fdfdfd" stroke="#465062" stroke-width="1.15"/><path d="M125.9 302.6 h9.6 v4.6 q0 2.9 -2.9 2.9 h-3.8 q-2.9 0 -2.9 -2.9z" fill="url(#bd)"/>
<g fill="#222" font-family='"Liberation Sans","Noto Sans CJK JP",sans-serif'><text x="151.1" y="307.9" font-size="10.5" textLength="46.9" lengthAdjust="spacingAndGlyphs">キーボード</text><text x="200.2" y="307.9" font-size="10.5" text-anchor="middle">・</text><text x="202.4" y="307.9" font-size="10.5">下面</text></g>
<rect x="94" y="318" width="150.8" height="20" fill="#f1f1f1"/>
<path d="M97.3 328 Q105.05 319 112.8 328 Q105.05 337 97.3 328Z" fill="#9c9c9c"/><circle cx="105.05" cy="328" r="3.2" fill="#f1f1f1"/><circle cx="105.05" cy="328" r="1.7" fill="#9c9c9c"/><rect x="122.5" y="320.3" width="15" height="15.4" rx="4.2" fill="#fdfdfd" stroke="#465062" stroke-width="1.15"/><path d="M125.9 326.6 h9.6 v4.6 q0 2.9 -2.9 2.9 h-3.8 q-2.9 0 -2.9 -2.9z" fill="url(#bd)"/>
<g fill="#222" font-family='"Liberation Sans","Noto Sans CJK JP",sans-serif'><text x="151.1" y="331.9" font-size="10.5" textLength="44.5" lengthAdjust="spacingAndGlyphs">キーボード</text><text x="197.8" y="331.9" font-size="10.5" text-anchor="middle">・</text><text x="200" y="331.9" font-size="10.5" textLength="33.7" lengthAdjust="spacingAndGlyphs">コネクタ</text></g>
<rect x="94" y="342" width="154.8" height="20" fill="#f1f1f1"/>
<path d="M97.3 352 Q105.05 343 112.8 352 Q105.05 361 97.3 352Z" fill="#9c9c9c"/><circle cx="105.05" cy="352" r="3.2" fill="#f1f1f1"/><circle cx="105.05" cy="352" r="1.7" fill="#9c9c9c"/><rect x="122.5" y="344.3" width="15" height="15.4" rx="4.2" fill="#fdfdfd" stroke="#465062" stroke-width="1.15"/><path d="M125.9 350.6 h9.6 v4.6 q0 2.9 -2.9 2.9 h-3.8 q-2.9 0 -2.9 -2.9z" fill="url(#bd)"/>
<g fill="#222" font-family='"Liberation Sans","Noto Sans CJK JP",sans-serif'><text x="151.1" y="355.9" font-size="10.5" textLength="44.9" lengthAdjust="spacingAndGlyphs">キーボード</text><text x="198.16" y="355.9" font-size="10.5" text-anchor="middle">・</text><text x="200.37" y="355.9" font-size="10.5" textLength="33.5" lengthAdjust="spacingAndGlyphs">スタンド</text><text x="233.93" y="355.90" font-size="10.80" textLength="5.77" lengthAdjust="spacingAndGlyphs" >1</text></g>
<rect x="94" y="366" width="166.8" height="20" fill="#f1f1f1"/>
<path d="M97.3 376 Q105.05 367 112.8 376 Q105.05 385 97.3 376Z" fill="#9c9c9c"/><circle cx="105.05" cy="376" r="3.2" fill="#f1f1f1"/><circle cx="105.05" cy="376" r="1.7" fill="#9c9c9c"/><rect x="122.5" y="368.3" width="15" height="15.4" rx="4.2" fill="#fdfdfd" stroke="#465062" stroke-width="1.15"/><path d="M125.9 374.6 h9.6 v4.6 q0 2.9 -2.9 2.9 h-3.8 q-2.9 0 -2.9 -2.9z" fill="url(#bd)"/>
<g fill="#222" font-family='"Liberation Sans","Noto Sans CJK JP",sans-serif'><text x="151.1" y="379.9" font-size="10.5" textLength="45.2" lengthAdjust="spacingAndGlyphs">キーボード</text><text x="198.48" y="379.9" font-size="10.5" text-anchor="middle">・</text><text x="200.69" y="379.9" font-size="10.5" textLength="33.8" lengthAdjust="spacingAndGlyphs">スタンド</text><text x="234.49" y="379.9" font-size="10.5">軸</text><text x="244.99" y="379.90" font-size="10.80" textLength="5.81" lengthAdjust="spacingAndGlyphs" >1</text></g>
<rect x="94" y="390" width="166.8" height="20" fill="#f1f1f1"/>
<path d="M97.3 400 Q105.05 391 112.8 400 Q105.05 409 97.3 400Z" fill="#9c9c9c"/><circle cx="105.05" cy="400" r="3.2" fill="#f1f1f1"/><circle cx="105.05" cy="400" r="1.7" fill="#9c9c9c"/><rect x="122.5" y="392.3" width="15" height="15.4" rx="4.2" fill="#fdfdfd" stroke="#465062" stroke-width="1.15"/><path d="M125.9 398.6 h9.6 v4.6 q0 2.9 -2.9 2.9 h-3.8 q-2.9 0 -2.9 -2.9z" fill="url(#bd)"/>
<g fill="#222" font-family='"Liberation Sans","Noto Sans CJK JP",sans-serif'><text x="151.1" y="403.9" font-size="10.5" textLength="45.7" lengthAdjust="spacingAndGlyphs">キーボード</text><text x="198.96" y="403.9" font-size="10.5" text-anchor="middle">・</text><text x="201.17" y="403.9" font-size="10.5" textLength="34.2" lengthAdjust="spacingAndGlyphs">スタンド</text><text x="235.33" y="403.9" font-size="10.5">軸</text><text x="245.83" y="403.90" font-size="10.80" textLength="5.87" lengthAdjust="spacingAndGlyphs" >2</text></g>
<rect x="94" y="414" width="154.8" height="20" fill="#f1f1f1"/>
<path d="M97.3 424 Q105.05 415 112.8 424 Q105.05 433 97.3 424Z" fill="#9c9c9c"/><circle cx="105.05" cy="424" r="3.2" fill="#f1f1f1"/><circle cx="105.05" cy="424" r="1.7" fill="#9c9c9c"/><rect x="122.5" y="416.3" width="15" height="15.4" rx="4.2" fill="#fdfdfd" stroke="#465062" stroke-width="1.15"/><path d="M125.9 422.6 h9.6 v4.6 q0 2.9 -2.9 2.9 h-3.8 q-2.9 0 -2.9 -2.9z" fill="url(#bd)"/>
<g fill="#222" font-family='"Liberation Sans","Noto Sans CJK JP",sans-serif'><text x="151.1" y="427.9" font-size="10.5" textLength="45.3" lengthAdjust="spacingAndGlyphs">キーボード</text><text x="198.59" y="427.9" font-size="10.5" text-anchor="middle">・</text><text x="200.8" y="427.9" font-size="10.5" textLength="33.9" lengthAdjust="spacingAndGlyphs">スタンド</text><text x="234.68" y="427.90" font-size="10.80" textLength="5.82" lengthAdjust="spacingAndGlyphs" >2</text></g>
<rect x="94" y="438" width="138.8" height="20" fill="#f1f1f1"/>
<path d="M97.3 448 Q105.05 439 112.8 448 Q105.05 457 97.3 448Z" fill="#9c9c9c"/><circle cx="105.05" cy="448" r="3.2" fill="#f1f1f1"/><circle cx="105.05" cy="448" r="1.7" fill="#9c9c9c"/><rect x="122.5" y="440.3" width="15" height="15.4" rx="4.2" fill="#fdfdfd" stroke="#465062" stroke-width="1.15"/><path d="M125.9 446.6 h9.6 v4.6 q0 2.9 -2.9 2.9 h-3.8 q-2.9 0 -2.9 -2.9z" fill="url(#bd)"/>
<g fill="#222" font-family='"Liberation Sans","Noto Sans CJK JP",sans-serif'><text x="151.1" y="451.9" font-size="10.5" textLength="46.9" lengthAdjust="spacingAndGlyphs">キーボード</text><text x="200.2" y="451.9" font-size="10.5" text-anchor="middle">・</text><text x="202.4" y="451.9" font-size="10.5">上面</text></g>
<rect x="76" y="462" width="143" height="20" fill="#f1f1f1"/>
<path d="M79.3 472 Q87.05 463 94.8 472 Q87.05 481 79.3 472Z" fill="#9c9c9c"/><circle cx="87.05" cy="472" r="3.2" fill="#f1f1f1"/><circle cx="87.05" cy="472" r="1.7" fill="#9c9c9c"/><rect x="104.5" y="464.3" width="15" height="15.4" rx="4.2" fill="#fdfdfd" stroke="#465062" stroke-width="1.15"/><path d="M107.9 470.6 h9.6 v4.6 q0 2.9 -2.9 2.9 h-3.8 q-2.9 0 -2.9 -2.9z" fill="url(#bd)"/>
<g fill="#222" font-family='"Liberation Sans","Noto Sans CJK JP",sans-serif'><text x="133.1" y="475.9" font-size="10.5" textLength="61.2" lengthAdjust="spacingAndGlyphs">フロントパネル</text><text x="197.20" y="475.90" font-size="10.80" textLength="12.60" lengthAdjust="spacingAndGlyphs" >(8)</text></g>
<rect x="76" y="486" width="123" height="20" fill="#f1f1f1"/>
<path d="M79.3 496 Q87.05 487 94.8 496 Q87.05 505 79.3 496Z" fill="#9c9c9c"/><circle cx="87.05" cy="496" r="3.2" fill="#f1f1f1"/><circle cx="87.05" cy="496" r="1.7" fill="#9c9c9c"/><rect x="104.5" y="488.3" width="15" height="15.4" rx="4.2" fill="#fdfdfd" stroke="#465062" stroke-width="1.15"/><path d="M107.9 494.6 h9.6 v4.6 q0 2.9 -2.9 2.9 h-3.8 q-2.9 0 -2.9 -2.9z" fill="url(#bd)"/>
<g fill="#222" font-family='"Liberation Sans","Noto Sans CJK JP",sans-serif'><text x="133.1" y="499.9" font-size="10.5">内部</text><text x="154.1" y="499.9" font-size="10.5" textLength="34" lengthAdjust="spacingAndGlyphs">フレーム</text></g>
<rect x="76" y="510" width="166.8" height="20" fill="#f1f1f1"/>
<path d="M79.3 520 Q87.05 511 94.8 520 Q87.05 529 79.3 520Z" fill="#9c9c9c"/><circle cx="87.05" cy="520" r="3.2" fill="#f1f1f1"/><circle cx="87.05" cy="520" r="1.7" fill="#9c9c9c"/><rect x="104.5" y="512.3" width="15" height="15.4" rx="4.2" fill="#fdfdfd" stroke="#465062" stroke-width="1.15"/><path d="M107.9 518.6 h9.6 v4.6 q0 2.9 -2.9 2.9 h-3.8 q-2.9 0 -2.9 -2.9z" fill="url(#bd)"/>
<g fill="#222" font-family='"Liberation Sans","Noto Sans CJK JP",sans-serif'><text x="133.1" y="523.9" font-size="10.5">拡張</text><text x="154.1" y="523.9" font-size="10.5" textLength="47.6" lengthAdjust="spacingAndGlyphs">カートリッジ</text><text x="203.91" y="523.9" font-size="10.5" text-anchor="middle">・</text><text x="206.12" y="523.9" font-size="10.5" textLength="26.7" lengthAdjust="spacingAndGlyphs">レール</text></g>
<rect x="76" y="534" width="166.8" height="20" fill="#f1f1f1"/>
<path d="M79.3 544 Q87.05 535 94.8 544 Q87.05 553 79.3 544Z" fill="#9c9c9c"/><circle cx="87.05" cy="544" r="3.2" fill="#f1f1f1"/><circle cx="87.05" cy="544" r="1.7" fill="#9c9c9c"/><rect x="104.5" y="536.3" width="15" height="15.4" rx="4.2" fill="#fdfdfd" stroke="#465062" stroke-width="1.15"/><path d="M107.9 542.6 h9.6 v4.6 q0 2.9 -2.9 2.9 h-3.8 q-2.9 0 -2.9 -2.9z" fill="url(#bd)"/>
<g fill="#222" font-family='"Liberation Sans","Noto Sans CJK JP",sans-serif'><text x="133.1" y="547.9" font-size="10.5">拡張</text><text x="154.1" y="547.9" font-size="10.5" textLength="46.8" lengthAdjust="spacingAndGlyphs">カートリッジ</text><text x="203.12" y="547.9" font-size="10.5" text-anchor="middle">・</text><text x="205.33" y="547.9" font-size="10.5" textLength="25.4" lengthAdjust="spacingAndGlyphs">ダミー</text></g>
<rect x="76" y="558" width="107" height="20" fill="#f1f1f1"/>
<path d="M79.3 568 Q87.05 559 94.8 568 Q87.05 577 79.3 568Z" fill="#9c9c9c"/><circle cx="87.05" cy="568" r="3.2" fill="#f1f1f1"/><circle cx="87.05" cy="568" r="1.7" fill="#9c9c9c"/><rect x="104.5" y="560.3" width="15" height="15.4" rx="4.2" fill="#fdfdfd" stroke="#465062" stroke-width="1.15"/><path d="M107.9 566.6 h9.6 v4.6 q0 2.9 -2.9 2.9 h-3.8 q-2.9 0 -2.9 -2.9z" fill="url(#bd)"/>
<g fill="#222" font-family='"Liberation Sans","Noto Sans CJK JP",sans-serif'><text x="133.1" y="571.9" font-size="10.5" textLength="25.2" lengthAdjust="spacingAndGlyphs">ボディ</text><text x="160.5" y="571.9" font-size="10.5" text-anchor="middle">・</text><text x="162.7" y="571.9" font-size="10.5">上</text></g>
<rect x="76" y="582" width="107" height="20" fill="#f1f1f1"/>
<path d="M79.3 592 Q87.05 583 94.8 592 Q87.05 601 79.3 592Z" fill="#9c9c9c"/><circle cx="87.05" cy="592" r="3.2" fill="#f1f1f1"/><circle cx="87.05" cy="592" r="1.7" fill="#9c9c9c"/><rect x="104.5" y="584.3" width="15" height="15.4" rx="4.2" fill="#fdfdfd" stroke="#465062" stroke-width="1.15"/><path d="M107.9 590.6 h9.6 v4.6 q0 2.9 -2.9 2.9 h-3.8 q-2.9 0 -2.9 -2.9z" fill="url(#bd)"/>
<g fill="#222" font-family='"Liberation Sans","Noto Sans CJK JP",sans-serif'><text x="133.1" y="595.9" font-size="10.5" textLength="25.2" lengthAdjust="spacingAndGlyphs">ボディ</text><text x="160.5" y="595.9" font-size="10.5" text-anchor="middle">・</text><text x="162.7" y="595.9" font-size="10.5">左</text></g>
<rect x="76" y="606" width="107" height="20" fill="#f1f1f1"/>
<path d="M79.3 616 Q87.05 607 94.8 616 Q87.05 625 79.3 616Z" fill="#9c9c9c"/><circle cx="87.05" cy="616" r="3.2" fill="#f1f1f1"/><circle cx="87.05" cy="616" r="1.7" fill="#9c9c9c"/><rect x="104.5" y="608.3" width="15" height="15.4" rx="4.2" fill="#fdfdfd" stroke="#465062" stroke-width="1.15"/><path d="M107.9 614.6 h9.6 v4.6 q0 2.9 -2.9 2.9 h-3.8 q-2.9 0 -2.9 -2.9z" fill="url(#bd)"/>
<g fill="#222" font-family='"Liberation Sans","Noto Sans CJK JP",sans-serif'><text x="133.1" y="619.9" font-size="10.5" textLength="25.2" lengthAdjust="spacingAndGlyphs">ボディ</text><text x="160.5" y="619.9" font-size="10.5" text-anchor="middle">・</text><text x="162.7" y="619.9" font-size="10.5">右</text></g>
<rect x="76" y="630" width="119" height="20" fill="#f1f1f1"/>
<path d="M79.3 640 Q87.05 631 94.8 640 Q87.05 649 79.3 640Z" fill="#9c9c9c"/><circle cx="87.05" cy="640" r="3.2" fill="#f1f1f1"/><circle cx="87.05" cy="640" r="1.7" fill="#9c9c9c"/><rect x="104.5" y="632.3" width="15" height="15.4" rx="4.2" fill="#fdfdfd" stroke="#465062" stroke-width="1.15"/><path d="M107.9 638.6 h9.6 v4.6 q0 2.9 -2.9 2.9 h-3.8 q-2.9 0 -2.9 -2.9z" fill="url(#bd)"/>
<g fill="#222" font-family='"Liberation Sans","Noto Sans CJK JP",sans-serif'><text x="133.1" y="643.9" font-size="10.5" textLength="26.7" lengthAdjust="spacingAndGlyphs">ボディ</text><text x="161.99" y="643.9" font-size="10.5" text-anchor="middle">・</text><text x="164.2" y="643.9" font-size="10.5">底面</text></g>
<rect x="76" y="654" width="114.7" height="20" fill="#f1f1f1"/>
<path d="M79.3 664 Q87.05 655 94.8 664 Q87.05 673 79.3 664Z" fill="#9c9c9c"/><circle cx="87.05" cy="664" r="3.2" fill="#f1f1f1"/><circle cx="87.05" cy="664" r="1.7" fill="#9c9c9c"/><rect x="104.5" y="656.3" width="15" height="15.4" rx="4.2" fill="#fdfdfd" stroke="#465062" stroke-width="1.15"/><path d="M107.9 662.6 h9.6 v4.6 q0 2.9 -2.9 2.9 h-3.8 q-2.9 0 -2.9 -2.9z" fill="url(#bd)"/>
<g fill="#222" font-family='"Liberation Sans","Noto Sans CJK JP",sans-serif'><text x="133.1" y="667.9" font-size="10.5">背面</text><text x="154.1" y="667.9" font-size="10.5" textLength="27.7" lengthAdjust="spacingAndGlyphs">パネル</text></g>
<rect x="76" y="678" width="86.9" height="20" fill="#f1f1f1"/>
<path d="M79.3 688 Q87.05 679 94.8 688 Q87.05 697 79.3 688Z" fill="#9c9c9c"/><circle cx="87.05" cy="688" r="3.2" fill="#f1f1f1"/><circle cx="87.05" cy="688" r="1.7" fill="#9c9c9c"/><rect x="104.5" y="680.3" width="15" height="15.4" rx="4.2" fill="#fdfdfd" stroke="#465062" stroke-width="1.15"/><path d="M107.9 686.6 h9.6 v4.6 q0 2.9 -2.9 2.9 h-3.8 q-2.9 0 -2.9 -2.9z" fill="url(#bd)"/>
<g fill="#222" font-family='"Liberation Sans","Noto Sans CJK JP",sans-serif'><text x="133.1" y="691.9" font-size="10.5">足</text><text x="143.60" y="691.90" font-size="10.80" textLength="8.10" lengthAdjust="spacingAndGlyphs" >4</text></g>
<rect x="76" y="702" width="86.9" height="20" fill="#f1f1f1"/>
<path d="M79.3 712 Q87.05 703 94.8 712 Q87.05 721 79.3 712Z" fill="#9c9c9c"/><circle cx="87.05" cy="712" r="3.2" fill="#f1f1f1"/><circle cx="87.05" cy="712" r="1.7" fill="#9c9c9c"/><rect x="104.5" y="704.3" width="15" height="15.4" rx="4.2" fill="#fdfdfd" stroke="#465062" stroke-width="1.15"/><path d="M107.9 710.6 h9.6 v4.6 q0 2.9 -2.9 2.9 h-3.8 q-2.9 0 -2.9 -2.9z" fill="url(#bd)"/>
<g fill="#222" font-family='"Liberation Sans","Noto Sans CJK JP",sans-serif'><text x="133.1" y="715.9" font-size="10.5">足</text><text x="143.60" y="715.90" font-size="10.80" textLength="8.10" lengthAdjust="spacingAndGlyphs" >3</text></g>
<rect x="76" y="726" width="83" height="20" fill="#f1f1f1"/>
<path d="M79.3 736 Q87.05 727 94.8 736 Q87.05 745 79.3 736Z" fill="#9c9c9c"/><circle cx="87.05" cy="736" r="3.2" fill="#f1f1f1"/><circle cx="87.05" cy="736" r="1.7" fill="#9c9c9c"/><rect x="104.5" y="728.3" width="15" height="15.4" rx="4.2" fill="#fdfdfd" stroke="#465062" stroke-width="1.15"/><path d="M107.9 734.6 h9.6 v4.6 q0 2.9 -2.9 2.9 h-3.8 q-2.9 0 -2.9 -2.9z" fill="url(#bd)"/>
<g fill="#222" font-family='"Liberation Sans","Noto Sans CJK JP",sans-serif'><text x="133.1" y="739.9" font-size="10.5">足</text><text x="143.60" y="739.90" font-size="10.80" textLength="7.20" lengthAdjust="spacingAndGlyphs" >1</text></g>
<rect x="76" y="750" width="86.9" height="20" fill="#f1f1f1"/>
<path d="M79.3 760 Q87.05 751 94.8 760 Q87.05 769 79.3 760Z" fill="#9c9c9c"/><circle cx="87.05" cy="760" r="3.2" fill="#f1f1f1"/><circle cx="87.05" cy="760" r="1.7" fill="#9c9c9c"/><rect x="104.5" y="752.3" width="15" height="15.4" rx="4.2" fill="#fdfdfd" stroke="#465062" stroke-width="1.15"/><path d="M107.9 758.6 h9.6 v4.6 q0 2.9 -2.9 2.9 h-3.8 q-2.9 0 -2.9 -2.9z" fill="url(#bd)"/>
<g fill="#222" font-family='"Liberation Sans","Noto Sans CJK JP",sans-serif'><text x="133.1" y="763.9" font-size="10.5">足</text><text x="143.60" y="763.90" font-size="10.80" textLength="8.10" lengthAdjust="spacingAndGlyphs" >2</text></g>
<rect x="76" y="774" width="135" height="20" fill="#f1f1f1"/>
<path d="M79.3 784 Q87.05 775 94.8 784 Q87.05 793 79.3 784Z" fill="#9c9c9c"/><circle cx="87.05" cy="784" r="3.2" fill="#f1f1f1"/><circle cx="87.05" cy="784" r="1.7" fill="#9c9c9c"/><rect x="104.5" y="776.3" width="15" height="15.4" rx="4.2" fill="#fdfdfd" stroke="#465062" stroke-width="1.15"/><path d="M107.9 782.6 h9.6 v4.6 q0 2.9 -2.9 2.9 h-3.8 q-2.9 0 -2.9 -2.9z" fill="url(#bd)"/>
<g fill="#222" font-family='"Liberation Sans","Noto Sans CJK JP",sans-serif'><text x="133.1" y="787.9" font-size="10.5" textLength="48.2" lengthAdjust="spacingAndGlyphs">カートリッジ</text><text x="181.35" y="787.90" font-size="10.80" textLength="5.64" lengthAdjust="spacingAndGlyphs" >1</text><text x="189.2" y="787.9" font-size="10.5" text-anchor="middle">・</text><text x="191.4" y="787.9" font-size="10.5">蓋</text></g>
<rect x="76" y="798" width="135" height="20" fill="#f1f1f1"/>
<path d="M79.3 808 Q87.05 799 94.8 808 Q87.05 817 79.3 808Z" fill="#9c9c9c"/><circle cx="87.05" cy="808" r="3.2" fill="#f1f1f1"/><circle cx="87.05" cy="808" r="1.7" fill="#9c9c9c"/><rect x="104.5" y="800.3" width="15" height="15.4" rx="4.2" fill="#fdfdfd" stroke="#465062" stroke-width="1.15"/><path d="M107.9 806.6 h9.6 v4.6 q0 2.9 -2.9 2.9 h-3.8 q-2.9 0 -2.9 -2.9z" fill="url(#bd)"/>
<g fill="#222" font-family='"Liberation Sans","Noto Sans CJK JP",sans-serif'><text x="133.1" y="811.9" font-size="10.5" textLength="48.5" lengthAdjust="spacingAndGlyphs">カートリッジ</text><text x="181.61" y="811.90" font-size="10.80" textLength="5.68" lengthAdjust="spacingAndGlyphs" >2</text><text x="189.5" y="811.9" font-size="10.5" text-anchor="middle">・</text><text x="191.7" y="811.9" font-size="10.5">蓋</text></g>
<rect x="76" y="822" width="190.8" height="20" fill="#f1f1f1"/>
<path d="M79.3 832 Q87.05 823 94.8 832 Q87.05 841 79.3 832Z" fill="#9c9c9c"/><circle cx="87.05" cy="832" r="3.2" fill="#f1f1f1"/><circle cx="87.05" cy="832" r="1.7" fill="#9c9c9c"/><rect x="104.5" y="824.3" width="15" height="15.4" rx="4.2" fill="#fdfdfd" stroke="#465062" stroke-width="1.15"/><path d="M107.9 830.6 h9.6 v4.6 q0 2.9 -2.9 2.9 h-3.8 q-2.9 0 -2.9 -2.9z" fill="url(#bd)"/>
<g fill="#222" font-family='"Liberation Sans","Noto Sans CJK JP",sans-serif'><text x="133.1" y="835.9" font-size="10.5" textLength="48.6" lengthAdjust="spacingAndGlyphs">カートリッジ</text><text x="181.75" y="835.90" font-size="10.80" textLength="5.69" lengthAdjust="spacingAndGlyphs" >1</text><text x="189.64" y="835.9" font-size="10.5" text-anchor="middle">・</text><text x="191.85" y="835.9" font-size="10.5" textLength="65.2" lengthAdjust="spacingAndGlyphs">イジェクトボタン</text></g>
<rect x="76" y="846" width="190.8" height="20" fill="#f1f1f1"/>
<path d="M79.3 856 Q87.05 847 94.8 856 Q87.05 865 79.3 856Z" fill="#9c9c9c"/><circle cx="87.05" cy="856" r="3.2" fill="#f1f1f1"/><circle cx="87.05" cy="856" r="1.7" fill="#9c9c9c"/><rect x="104.5" y="848.3" width="15" height="15.4" rx="4.2" fill="#fdfdfd" stroke="#465062" stroke-width="1.15"/><path d="M107.9 854.6 h9.6 v4.6 q0 2.9 -2.9 2.9 h-3.8 q-2.9 0 -2.9 -2.9z" fill="url(#bd)"/>
<g fill="#222" font-family='"Liberation Sans","Noto Sans CJK JP",sans-serif'><text x="133.1" y="859.9" font-size="10.5" textLength="48.6" lengthAdjust="spacingAndGlyphs">カートリッジ</text><text x="181.75" y="859.90" font-size="10.80" textLength="5.69" lengthAdjust="spacingAndGlyphs" >2</text><text x="189.64" y="859.9" font-size="10.5" text-anchor="middle">・</text><text x="191.85" y="859.9" font-size="10.5" textLength="65.2" lengthAdjust="spacingAndGlyphs">イジェクトボタン</text></g>
<rect x="76" y="870" width="119" height="20" fill="#f1f1f1"/>
<path d="M79.3 880 Q87.05 871 94.8 880 Q87.05 889 79.3 880Z" fill="#9c9c9c"/><circle cx="87.05" cy="880" r="3.2" fill="#f1f1f1"/><circle cx="87.05" cy="880" r="1.7" fill="#9c9c9c"/><rect x="104.5" y="872.3" width="15" height="15.4" rx="4.2" fill="#fdfdfd" stroke="#465062" stroke-width="1.15"/><path d="M107.9 878.6 h9.6 v4.6 q0 2.9 -2.9 2.9 h-3.8 q-2.9 0 -2.9 -2.9z" fill="url(#bd)"/>
<g fill="#222" font-family='"Liberation Sans","Noto Sans CJK JP",sans-serif'><text x="133.1" y="883.9" font-size="10.5">電源</text><text x="154.1" y="883.9" font-size="10.5" textLength="31.4" lengthAdjust="spacingAndGlyphs">スイッチ</text></g>
<rect x="76" y="894" width="126.9" height="20" fill="#f1f1f1"/>
<path d="M79.3 904 Q87.05 895 94.8 904 Q87.05 913 79.3 904Z" fill="#9c9c9c"/><circle cx="87.05" cy="904" r="3.2" fill="#f1f1f1"/><circle cx="87.05" cy="904" r="1.7" fill="#9c9c9c"/><rect x="104.5" y="896.3" width="15" height="15.4" rx="4.2" fill="#fdfdfd" stroke="#465062" stroke-width="1.15"/><path d="M107.9 902.6 h9.6 v4.6 q0 2.9 -2.9 2.9 h-3.8 q-2.9 0 -2.9 -2.9z" fill="url(#bd)"/>
<g fill="#222" font-family='"Liberation Sans","Noto Sans CJK JP",sans-serif'><text x="133.1" y="907.9" font-size="10.5" textLength="59.4" lengthAdjust="spacingAndGlyphs">リセットスイッチ</text></g>
<rect x="76" y="918" width="150.7" height="20" fill="#f1f1f1"/>
<path d="M79.3 928 Q87.05 919 94.8 928 Q87.05 937 79.3 928Z" fill="#9c9c9c"/><circle cx="87.05" cy="928" r="3.2" fill="#f1f1f1"/><circle cx="87.05" cy="928" r="1.7" fill="#9c9c9c"/><rect x="104.5" y="920.3" width="15" height="15.4" rx="4.2" fill="#fdfdfd" stroke="#465062" stroke-width="1.15"/><path d="M107.9 926.6 h9.6 v4.6 q0 2.9 -2.9 2.9 h-3.8 q-2.9 0 -2.9 -2.9z" fill="url(#bd)"/>
<g fill="#222" font-family='"Liberation Sans","Noto Sans CJK JP",sans-serif'><text x="133.1" y="931.9" font-size="10.5" textLength="85.1" lengthAdjust="spacingAndGlyphs">ジョイスティックポート</text></g>
<rect x="76" y="942" width="110.9" height="20" fill="#f1f1f1"/>
<path d="M79.3 952 Q87.05 943 94.8 952 Q87.05 961 79.3 952Z" fill="#9c9c9c"/><circle cx="87.05" cy="952" r="3.2" fill="#f1f1f1"/><circle cx="87.05" cy="952" r="1.7" fill="#9c9c9c"/><rect x="104.5" y="944.3" width="15" height="15.4" rx="4.2" fill="#fdfdfd" stroke="#465062" stroke-width="1.15"/><path d="M107.9 950.6 h9.6 v4.6 q0 2.9 -2.9 2.9 h-3.8 q-2.9 0 -2.9 -2.9z" fill="url(#bd)"/>
<g fill="#222" font-family='"Liberation Sans","Noto Sans CJK JP",sans-serif'><text x="133.1" y="955.9" font-size="10.5">電源</text><text x="154.10" y="955.90" font-size="10.80" textLength="21.80" lengthAdjust="spacingAndGlyphs" >LED</text></g>
<rect x="76" y="966" width="99" height="20" fill="#f1f1f1"/>
<path d="M79.3 976 Q87.05 967 94.8 976 Q87.05 985 79.3 976Z" fill="#9c9c9c"/><circle cx="87.05" cy="976" r="3.2" fill="#f1f1f1"/><circle cx="87.05" cy="976" r="1.7" fill="#9c9c9c"/><rect x="104.5" y="968.3" width="15" height="15.4" rx="4.2" fill="#fdfdfd" stroke="#465062" stroke-width="1.15"/><path d="M107.9 974.6 h9.6 v4.6 q0 2.9 -2.9 2.9 h-3.8 q-2.9 0 -2.9 -2.9z" fill="url(#bd)"/>
<g fill="#222" font-family='"Liberation Sans","Noto Sans CJK JP",sans-serif'><text x="133.10" y="979.90" font-size="10.80" textLength="22.19" lengthAdjust="spacingAndGlyphs" >FDD</text><text x="157.49" y="979.9" font-size="10.5" text-anchor="middle">・</text><text x="159.70" y="979.90" font-size="10.80" textLength="6.00" lengthAdjust="spacingAndGlyphs" >1</text></g>
<rect x="841" y="1012.3" width="237" height="23" fill="#f0f0f0"/>
<g fill="none" stroke="#2b2b2b" stroke-width="1.2"><ellipse cx="852.6" cy="1025" rx="7" ry="3"/></g><path d="M851.6 1031 V1018.5 h-1.6 l2.6 -3.6 l2.6 3.6 h-1.6 V1031z" fill="#f4f4f4" stroke="#2b2b2b" stroke-width="0.9"/><path d="M846 1026.3 l3.5 -2.2 v4.6z" fill="#2b2b2b"/>
<path d="M865.4 1021.8 h5.2 l-2.6 3.4z" fill="#222"/>
<path d="M877.5 1021 h14.5 v10 h-14.5z" fill="#eef0f6" stroke="#3d4660" stroke-width="1.2"/><rect x="880.3" y="1024.6" width="9" height="3.4" fill="#9aa4c0" stroke="#3d4660" stroke-width="0.8"/><path d="M879 1021 l2.5 -3 l2 1.5 l3 -2.2 l1.8 1.2 l1.6 -0.8 v3.3" fill="#c8cad0" stroke="#555" stroke-width="0.8"/>
<path d="M904.5 1025 q-1.6 -1.8 -0.4 -2.6 q1 -0.6 2.4 1 l1 1.2 v-6 q0.1 -1.2 1.1 -1.2 q1 0 1 1.2 v-1.6 q0.1 -1.1 1.1 -1.1 q1 0 1.1 1.1 v1.4 q0.1 -1 1 -1 q1 0 1 1 v2 q0.2 -0.8 1 -0.8 q0.9 0 0.9 1 v5.2 q0 3.6 -2.4 5 h-4.8 q-1.6 -0.8 -2.6 -2.6z" fill="#fafafa" stroke="#2b2b2b" stroke-width="1"/><path d="M909.7 1019 v4.6 M911.9 1018 v5.4 M914 1019.4 v4.4" stroke="#2b2b2b" stroke-width="0.8" fill="none"/>
<circle cx="933.5" cy="1022.8" r="4.3" fill="#dbe8ef" stroke="#2f3b44" stroke-width="1.3"/><path d="M936.725 1026.02 l4.2 4.2" stroke="#2b2b2b" stroke-width="2.6" stroke-linecap="round"/><path d="M930.92 1022.4 a2.58 2.58 0 0 1 2.15 -2.365" stroke="#fff" stroke-width="1" fill="none"/>
<path d="M940.5 1018 h4.4 M942.7 1015.9 v4.2 M940.5 1022.6 h4.4" stroke="#2b2b2b" stroke-width="1" fill="none"/>
<rect x="955.3" y="1016.2" width="15.4" height="14.6" fill="none" stroke="#2b2b2b" stroke-width="1" stroke-dasharray="2.2 1.6"/>
<circle cx="962" cy="1022.4" r="5.6" fill="#dbe8ef" stroke="#2f3b44" stroke-width="1.3"/><path d="M966.2 1026.6 l4.2 4.2" stroke="#2b2b2b" stroke-width="2.6" stroke-linecap="round"/><path d="M958.64 1022 a3.36 3.36 0 0 1 2.8 -3.08" stroke="#fff" stroke-width="1" fill="none"/>
<path d="M976.4 1021.8 h5.2 l-2.6 3.4z" fill="#222"/>
<rect x="988.3" y="1016.5" width="15.2" height="11.4" rx="0.8" fill="#d9dde6" stroke="#3a3a3a" stroke-width="1.2"/><rect x="990.6" y="1018.7" width="10.6" height="7" fill="#9db6dc" stroke="#5b6f92" stroke-width="0.6"/><path d="M993 1031.2 h6 l-0.8 -3.2 h-4.4z" fill="#d0d0d0" stroke="#666" stroke-width="0.6"/>
<path d="M1006.2 1021.8 h5.2 l-2.6 3.4z" fill="#222"/>
<rect x="1019" y="1016.2" width="15.6" height="15" fill="#8d93a8"/><path d="M1022.12 1016.2 v15 M1019 1019.2 h15.6" stroke="#e4e6ee" stroke-width="0.9"/><path d="M1025.24 1016.2 v15 M1019 1022.2 h15.6" stroke="#e4e6ee" stroke-width="0.9"/><path d="M1028.36 1016.2 v15 M1019 1025.2 h15.6" stroke="#e4e6ee" stroke-width="0.9"/><path d="M1031.48 1016.2 v15 M1019 1028.2 h15.6" stroke="#e4e6ee" stroke-width="0.9"/><rect x="1019" y="1016.2" width="15.6" height="15" fill="none" stroke="#4a4f63" stroke-width="0.9"/>
<path d="M1037.6 1021.8 h5.2 l-2.6 3.4z" fill="#222"/>
<rect x="1050.2" y="1017" width="14.6" height="12.6" rx="1" fill="#c6d3ec" stroke="#35508c" stroke-width="1.2"/><path d="M1057.5 1017 v12.6 M1050.2 1023.3 h14.6" stroke="#35508c" stroke-width="1.2"/><rect x="1052" y="1018.8" width="3.7" height="2.8" fill="#8fa9de"/><rect x="1059.3" y="1018.8" width="3.7" height="2.8" fill="#8fa9de"/><rect x="1052" y="1025.1" width="3.7" height="2.8" fill="#8fa9de"/><rect x="1059.3" y="1025.1" width="3.7" height="2.8" fill="#8fa9de"/>
<path d="M1068.6 1021.8 h5.2 l-2.6 3.4z" fill="#222"/>
<text transform="matrix(2.0591 0.928 -1.9778 0.8643 1839.48 181.82)" x="0" y="0" font-size="10" fill="#8c8c8c" font-family='"Liberation Sans","Noto Sans CJK JP",sans-serif'>上</text>
<text transform="matrix(1.9603 1.1426 0.1567 2.2503 1831.11 214.44)" x="0" y="0" font-size="10" fill="#8c8c8c" font-family='"Liberation Sans","Noto Sans CJK JP",sans-serif'>前</text>
<text transform="matrix(2.0765 -1.0789 0.0406 2.3548 1863.91 227.37)" x="0" y="0" font-size="10" fill="#8c8c8c" font-family='"Liberation Sans","Noto Sans CJK JP",sans-serif'>右</text>
</svg>
<div class="a" style="left:1920px;top:0px;width:8px;height:1048px;background:linear-gradient(#00a8f3 0%,#00a2ee 60%,#0078c8 80%,#0067b4 100%);"></div><div class="a" style="left:0px;top:1040px;width:1920px;height:8px;background:#101010;"></div><div class="a" style="left:490px;top:1041px;width:48px;height:7px;background:#3a3a3a;"></div><div class="a" style="left:23.5px;top:5.5px;font-size:12.3px;line-height:12.3px;color:#000;font-weight:normal;white-space:pre;transform:scaleX(0.8978);transform-origin:0 0">Autodesk Fusion 360 (</div><div class="a" style="left:529px;top:36.5px;font-size:12px;line-height:12px;color:#3c3c3c;font-weight:normal;white-space:pre;">YIS-805 v47*</div><div class="a" style="left:1258px;top:36.5px;font-size:12px;line-height:12px;color:#555;font-weight:normal;white-space:pre;">YIS-805_open v3</div><div class="a" style="left:1732px;top:34px;font-size:11px;line-height:11px;color:#333;font-weight:normal;white-space:pre;">8/10</div><div class="a" style="left:177.6px;top:5.5px;font-size:12.3px;line-height:12.3px;color:#000;font-weight:normal;white-space:pre;">-</div><div class="a" style="left:257.6px;top:5.5px;font-size:12.3px;line-height:12.3px;color:#000;font-weight:normal;white-space:pre;">)</div>
</body></html>
